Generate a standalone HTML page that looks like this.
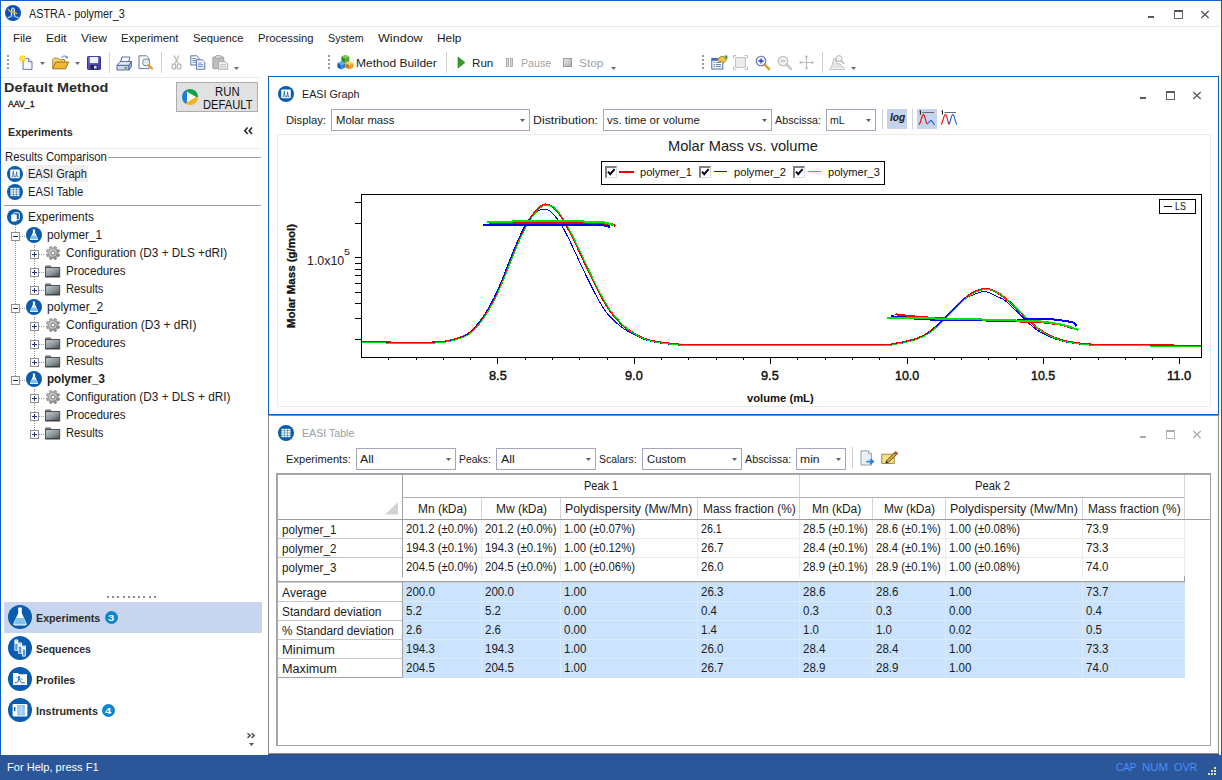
<!DOCTYPE html>
<html lang="en"><head><meta charset="utf-8"><title>ASTRA - polymer_3</title>
<style>
html,body{margin:0;padding:0;background:#fff;}
body{width:1222px;height:780px;position:relative;overflow:hidden;font-family:"Liberation Sans",sans-serif;font-size:12px;color:#000;}
.a{position:absolute;box-sizing:border-box;}
.t{position:absolute;white-space:nowrap;transform-origin:0 0;}
svg{position:absolute;overflow:visible;}
</style></head><body>
<div class="a" style="left:0;top:0;width:1222px;height:780px;background:#fff"></div>
<div class="a " style="left:0px;top:0px;width:1222px;height:1px;background:#1161c9;"></div>
<div class="a " style="left:0px;top:0px;width:1px;height:755px;background:#1161c9;"></div>
<div class="a " style="left:1221px;top:0px;width:1px;height:755px;background:#1161c9;"></div>
<header class="titlebar">
<div class="a " style="left:1px;top:26px;width:1219px;height:1px;background:#e9e9e9;"></div>
<svg style="left:5px;top:5px" width="16" height="16" viewBox="0 0 16 16"><circle cx="8" cy="8" r="8" fill="#0b52b4"/><path d="M2.6,12.4 C5.6,12.4 6.3,11.4 6.5,9 L6.8,3.6 Q8,2.2 9.2,3.6 L9.5,9 C9.7,11.4 10.4,12.4 13.4,12.4" fill="#2a7be0" stroke="#fff" stroke-width="1"/><path d="M3.2,4.4 L5.8,6.9 L11.8,8.4" fill="none" stroke="#f2b71f" stroke-width="1.3" stroke-linecap="round"/></svg>
<span class="t " style="left:28.80px;top:7.84px;font-size:12px;line-height:12px;color:#1b1b1b;transform:scaleX(0.9024);">ASTRA - polymer_3</span>
<div class="a " style="left:1148px;top:16px;width:6px;height:2px;background:#5a5a5a;"></div>
<div class="a " style="left:1174px;top:10px;width:9px;height:9px;border:1px solid #666;border-top:2px solid #555;"></div>
<svg style="left:1201px;top:11px" width="8" height="7" viewBox="0 0 8 7"><path d="M0.3,0 L7.7,7 M7.7,0 L0.3,7" stroke="#555" stroke-width="1.3" fill="none"/></svg>
</header>
<nav class="menubar">
<span class="t " style="left:12.80px;top:32.69px;font-size:11px;line-height:11px;color:#1b1b1b;transform:scaleX(1.0488);">File</span>
<span class="t " style="left:45.90px;top:32.69px;font-size:11px;line-height:11px;color:#1b1b1b;transform:scaleX(1.0913);">Edit</span>
<span class="t " style="left:80.70px;top:32.69px;font-size:11px;line-height:11px;color:#1b1b1b;transform:scaleX(1.0991);">View</span>
<span class="t " style="left:120.80px;top:32.69px;font-size:11px;line-height:11px;color:#1b1b1b;transform:scaleX(1.0334);">Experiment</span>
<span class="t " style="left:192.60px;top:32.69px;font-size:11px;line-height:11px;color:#1b1b1b;transform:scaleX(1.0192);">Sequence</span>
<span class="t " style="left:257.70px;top:32.69px;font-size:11px;line-height:11px;color:#1b1b1b;transform:scaleX(1.0216);">Processing</span>
<span class="t " style="left:327.70px;top:32.69px;font-size:11px;line-height:11px;color:#1b1b1b;transform:scaleX(0.9731);">System</span>
<span class="t " style="left:378.00px;top:32.69px;font-size:11px;line-height:11px;color:#1b1b1b;transform:scaleX(1.1425);">Window</span>
<span class="t " style="left:436.70px;top:32.69px;font-size:11px;line-height:11px;color:#1b1b1b;transform:scaleX(1.0829);">Help</span>
</nav>
<div class="toolbar">
<div class="a " style="left:7px;top:55px;width:2px;height:2px;background:#9a9a9a;"></div>
<div class="a " style="left:7px;top:59px;width:2px;height:2px;background:#9a9a9a;"></div>
<div class="a " style="left:7px;top:63px;width:2px;height:2px;background:#9a9a9a;"></div>
<div class="a " style="left:7px;top:67px;width:2px;height:2px;background:#9a9a9a;"></div>
<svg style="left:19px;top:55px" width="15" height="15" viewBox="0 0 15 15"><path d="M4,3.4 L9.6,3.4 L13,6.8 L13,14.4 L4,14.4 Z" fill="#f6f8fc" stroke="#5a6a9a" stroke-width="0.9"/><path d="M9.6,3.4 L9.6,6.8 L13,6.8" fill="#dfe6f3" stroke="#5a6a9a" stroke-width="0.8"/><path d="M3.6,0 V7.2 M0,3.6 H7.2 M1,1 L6.2,6.2 M6.2,1 L1,6.2" stroke="#f4c818" stroke-width="1.2"/><rect x="2.5" y="2.5" width="2.2" height="2.2" fill="#fff6b0"/></svg>
<svg style="left:40px;top:62px" width="5" height="3" viewBox="0 0 5 3"><path d="M0,0 L5,0 L2.5,3 Z" fill="#6a6a6a"/></svg>
<svg style="left:52px;top:55px" width="18" height="15" viewBox="0 0 18 15"><path d="M0.8,13.6 L0.8,4.4 L2,3.2 L6,3.2 L7.2,4.6 L12.6,4.6 L12.6,7" fill="#f7d774" stroke="#a07a18" stroke-width="0.9"/><path d="M0.8,13.8 L3.6,7 L16.6,7 L13.6,13.8 Z" fill="#f2b632" stroke="#8c6a12" stroke-width="0.9"/><path d="M9.4,3 C10.6,0.6 13.6,0.4 15,2.4" fill="none" stroke="#4a78c8" stroke-width="1"/><path d="M15.8,0.8 L15.6,3.4 L13.2,2.8 Z" fill="#4a78c8"/></svg>
<svg style="left:75px;top:62px" width="5" height="3" viewBox="0 0 5 3"><path d="M0,0 L5,0 L2.5,3 Z" fill="#6a6a6a"/></svg>
<svg style="left:87px;top:56px" width="14" height="14" viewBox="0 0 14 14"><defs><linearGradient id="svg1" x1="0" y1="0" x2="1" y2="1"><stop offset="0" stop-color="#6a62d8"/><stop offset="1" stop-color="#3a34a4"/></linearGradient></defs><rect x="0.5" y="0.5" width="13" height="13" rx="0.8" fill="url(#svg1)" stroke="#2d2782" stroke-width="0.9"/><rect x="2.8" y="0.9" width="8.4" height="6.2" fill="#eef0fb"/><rect x="3.6" y="9" width="6.8" height="4.2" fill="#23204a"/><rect x="7" y="9.8" width="2.6" height="2.8" fill="#d8d8ea"/></svg>
<div class="a " style="left:109px;top:52px;width:1px;height:21px;background:#d4d4d4;"></div>
<svg style="left:116px;top:56px" width="16" height="15" viewBox="0 0 16 15"><path d="M4.4,6 L6,1 L14,1 L12.6,6 Z" fill="#fff" stroke="#46609c" stroke-width="0.9"/><path d="M1,9.4 L4,5.6 L15.4,5.6 L13,9.4 Z" fill="#e6edf8" stroke="#46609c" stroke-width="0.9"/><path d="M1,9.4 L13,9.4 L13,14 L1,14 Z" fill="#cfdaee" stroke="#46609c" stroke-width="0.9"/><path d="M13,9.4 L15.4,5.6 L15.4,10.4 L13,14 Z" fill="#a8b8d8" stroke="#46609c" stroke-width="0.9"/><rect x="8.6" y="11" width="1.2" height="1.6" fill="#d03030"/><rect x="10" y="11" width="1.2" height="1.6" fill="#30a030"/></svg>
<svg style="left:138px;top:55px" width="15" height="15" viewBox="0 0 15 15"><path d="M1,0.8 L8.4,0.8 L11,3.4 L11,13.6 L1,13.6 Z" fill="#fbfcfe" stroke="#5a6a8a" stroke-width="0.9"/><circle cx="8.2" cy="7.4" r="3.6" fill="#dfeaf6" stroke="#7a8494" stroke-width="1"/><path d="M10.8,10.2 L14,13.6" stroke="#e09a2a" stroke-width="2.2" stroke-linecap="round"/></svg>
<div class="a " style="left:161px;top:52px;width:1px;height:21px;background:#d4d4d4;"></div>
<svg style="left:171px;top:55px" width="11" height="15" viewBox="0 0 11 15"><path d="M3,0.6 L7,8.6 M8,0.6 L4,8.6" stroke="#b4b4b4" stroke-width="1.2" fill="none"/><ellipse cx="2.9" cy="11.4" rx="1.9" ry="2.6" fill="none" stroke="#b4b4b4" stroke-width="1.2"/><ellipse cx="8.1" cy="11.4" rx="1.9" ry="2.6" fill="none" stroke="#b4b4b4" stroke-width="1.2"/></svg>
<svg style="left:190px;top:55px" width="16" height="15" viewBox="0 0 16 15"><path d="M0.8,0.8 L6.6,0.8 L9,3.2 L9,10 L0.8,10 Z" fill="#fff" stroke="#44629e" stroke-width="0.9"/><path d="M2.2,3.6 H6.4 M2.2,5.4 H7.6 M2.2,7.2 H7.6" stroke="#5a82c8" stroke-width="0.9"/><path d="M6.4,4.8 L12.2,4.8 L14.8,7.4 L14.8,14.2 L6.4,14.2 Z" fill="#fff" stroke="#44629e" stroke-width="0.9"/><path d="M7.8,8 H11.8 M7.8,9.8 H13.4 M7.8,11.6 H13.4" stroke="#5a82c8" stroke-width="0.9"/></svg>
<svg style="left:212px;top:55px" width="17" height="15" viewBox="0 0 17 15"><rect x="0.8" y="2" width="11" height="11.6" rx="0.8" fill="#bdbdbd" stroke="#9a9a9a" stroke-width="0.9"/><rect x="3.6" y="0.6" width="5.4" height="3" rx="0.8" fill="#d8d8d8" stroke="#9a9a9a" stroke-width="0.8"/><path d="M6.6,6.4 L13.2,6.4 L15.6,8.8 L15.6,14.2 L6.6,14.2 Z" fill="#eee" stroke="#a4a4a4" stroke-width="0.9"/><path d="M8.2,9.6 H13.8 M8.2,11.6 H13.8" stroke="#bcbcbc" stroke-width="0.9"/></svg>
<svg style="left:234px;top:67px" width="5" height="3" viewBox="0 0 5 3"><path d="M0,0 L5,0 L2.5,3 Z" fill="#6a6a6a"/></svg>
<div class="a " style="left:328px;top:55px;width:2px;height:2px;background:#9a9a9a;"></div>
<div class="a " style="left:328px;top:59px;width:2px;height:2px;background:#9a9a9a;"></div>
<div class="a " style="left:328px;top:63px;width:2px;height:2px;background:#9a9a9a;"></div>
<div class="a " style="left:328px;top:67px;width:2px;height:2px;background:#9a9a9a;"></div>
<svg style="left:337px;top:54px" width="17" height="17" viewBox="0 0 17 17"><path d="M4.4,2.6 l4,-2 l4,2 l-4,2 Z" fill="#7cc85a"/><path d="M4.4,2.6 l4,2 l0,4.6 l-4,-2 Z" fill="#2f8a22"/><path d="M12.4,2.6 l-4,2 l0,4.6 l4,-2 Z" fill="#4aa832"/><path d="M0.4,9 l4,-2 l4,2 l-4,2 Z" fill="#5aa8ec"/><path d="M0.4,9 l4,2 l0,4.6 l-4,-2 Z" fill="#1660b4"/><path d="M8.4,9 l-4,2 l0,4.6 l4,-2 Z" fill="#2a80d6"/><path d="M8.4,9 l4,-2 l4,2 l-4,2 Z" fill="#ffcf5a"/><path d="M8.4,9 l4,2 l0,4.6 l-4,-2 Z" fill="#d87c08"/><path d="M16.4,9 l-4,2 l0,4.6 l4,-2 Z" fill="#f09c1c"/></svg>
<span class="t " style="left:355.90px;top:57.69px;font-size:11px;line-height:11px;color:#1b1b1b;transform:scaleX(1.0919);">Method Builder</span>
<div class="a " style="left:446px;top:52px;width:1px;height:21px;background:#d4d4d4;"></div>
<svg style="left:458px;top:57px" width="7" height="11" viewBox="0 0 7 11"><path d="M0,0 L7,5.5 L0,11 Z" fill="#3a9a2a" stroke="#1f6e14" stroke-width="0.6"/></svg>
<span class="t " style="left:471.60px;top:57.69px;font-size:11px;line-height:11px;color:#1b1b1b;transform:scaleX(1.0551);">Run</span>
<div class="a " style="left:506px;top:58px;width:3px;height:9px;background:#dadada;border:1px solid #adadad;"></div>
<div class="a " style="left:510px;top:58px;width:3px;height:9px;background:#dadada;border:1px solid #adadad;"></div>
<span class="t " style="left:521.10px;top:57.69px;font-size:11px;line-height:11px;color:#a3a3a3;transform:scaleX(0.9646);">Pause</span>
<div class="a " style="left:563px;top:58px;width:9px;height:9px;background:linear-gradient(135deg,#e8e8e8,#b0b0b0);border:1px solid #9c9c9c;"></div>
<span class="t " style="left:578.80px;top:57.69px;font-size:11px;line-height:11px;color:#a3a3a3;transform:scaleX(1.0821);">Stop</span>
<svg style="left:611px;top:67px" width="5" height="3" viewBox="0 0 5 3"><path d="M0,0 L5,0 L2.5,3 Z" fill="#6a6a6a"/></svg>
<div class="a " style="left:702px;top:55px;width:2px;height:2px;background:#9a9a9a;"></div>
<div class="a " style="left:702px;top:59px;width:2px;height:2px;background:#9a9a9a;"></div>
<div class="a " style="left:702px;top:63px;width:2px;height:2px;background:#9a9a9a;"></div>
<div class="a " style="left:702px;top:67px;width:2px;height:2px;background:#9a9a9a;"></div>
<svg style="left:711px;top:55px" width="17" height="15" viewBox="0 0 17 15"><rect x="0.8" y="3.4" width="11" height="10.6" fill="#fbfcfe" stroke="#3a5a98" stroke-width="0.9"/><rect x="0.8" y="3.4" width="11" height="2.4" fill="#3a6cc0"/><path d="M2.5,7.5 H4 M5,7.5 H10 M2.5,9.5 H4 M5,9.5 H10 M2.5,11.5 H4 M5,11.5 H10" stroke="#6a86c0" stroke-width="1" fill="none"/><path d="M6.4,4.8 L10,1.2 L13.4,1.8 L15.4,5 L12.4,8.2 L10.4,6.4 L8.6,7.2 Z" fill="#f0c24a" stroke="#9a7414" stroke-width="0.8"/><path d="M13.2,0.6 L16.4,0.6 L16.4,4.4 L15,3.4 Z" fill="#2e9a3c"/></svg>
<svg style="left:733px;top:55px" width="15" height="15" viewBox="0 0 15 15"><rect x="2.6" y="2.6" width="9.8" height="9.8" fill="#ececec" stroke="#bdbdbd" stroke-width="0.9"/><path d="M0.6,3.4 V0.6 H3.4 M11.6,0.6 H14.4 V3.4 M14.4,11.6 V14.4 H11.6 M3.4,14.4 H0.6 V11.6" fill="none" stroke="#b8b8b8" stroke-width="1"/></svg>
<svg style="left:755px;top:55px" width="16" height="16" viewBox="0 0 16 16"><path d="M9.4,9.4 L14,14" stroke="#d9a62a" stroke-width="2.6" stroke-linecap="round"/><circle cx="6" cy="6" r="4.8" fill="#eef4ff" stroke="#6a7690" stroke-width="1.1"/><path d="M3.4,6 H8.6 M6,3.4 V8.6" stroke="#1f3fc0" stroke-width="1.3"/></svg>
<svg style="left:777px;top:55px" width="16" height="16" viewBox="0 0 16 16"><path d="M9.4,9.4 L14,14" stroke="#c9c9c9" stroke-width="2.6" stroke-linecap="round"/><circle cx="6" cy="6" r="4.8" fill="#f3f3f3" stroke="#b9b9b9" stroke-width="1.1"/><path d="M3.4,6 H8.6" stroke="#b4b4b4" stroke-width="1.3"/></svg>
<svg style="left:799px;top:55px" width="15" height="15" viewBox="0 0 15 15"><path d="M7.5,1.4 V13.6 M1.4,7.5 H13.6" stroke="#b9b9b9" stroke-width="1.1"/><path d="M7.5,0 L9.4,2.4 L5.6,2.4 Z M7.5,15 L9.4,12.6 L5.6,12.6 Z M0,7.5 L2.4,5.6 L2.4,9.4 Z M15,7.5 L12.6,5.6 L12.6,9.4 Z" fill="#b9b9b9"/></svg>
<div class="a " style="left:822px;top:52px;width:1px;height:21px;background:#d4d4d4;"></div>
<svg style="left:829px;top:55px" width="17" height="15" viewBox="0 0 17 15"><path d="M0.6,13.2 C3,13 3.4,9 4.6,4.6 C5.4,2 6.4,3 7.2,6 C8,9.4 9,9 10,8.6 C11.4,8.2 12,12.6 15.6,13" fill="#e6e6e6" stroke="#b4b4b4" stroke-width="0.9"/><path d="M0.2,14.4 H16" stroke="#b4b4b4" stroke-width="0.9"/><circle cx="10" cy="3.6" r="3" fill="#f3f3f3" stroke="#b9b9b9" stroke-width="1"/><path d="M12.2,5.8 L14.6,8.2" stroke="#bdbdbd" stroke-width="1.8" stroke-linecap="round"/></svg>
<svg style="left:851px;top:67px" width="5" height="3" viewBox="0 0 5 3"><path d="M0,0 L5,0 L2.5,3 Z" fill="#6a6a6a"/></svg>
</div>
<aside class="sidebar">
<div class="a " style="left:1px;top:77px;width:260px;height:1px;background:#e9e9e9;"></div>
<span class="t " style="left:4.20px;top:80.57px;font-size:13.5px;line-height:13.5px;color:#2b2b2b;font-weight:700;transform:scaleX(1.0697);">Default Method</span>
<span class="t " style="left:7.70px;top:99.98px;font-size:9px;line-height:9px;color:#111;-webkit-text-stroke:0.3px #111;transform:scaleX(0.9722);">AAV_1</span>
<div class="a " style="left:176px;top:82px;width:82px;height:30px;background:#e1e1e1;border:1px solid #adadad;"></div>
<svg style="left:182px;top:89px" width="16" height="16" viewBox="0 0 16 16"><path d="M8,8 L4,1.07 A8,8 0 0 0 4,14.93 Z" fill="#1f7fd3"/><path d="M8,8 L4,1.07 A8,8 0 0 1 16,8 Z" fill="#12a24c"/><path d="M8,8 L16,8 A8,8 0 0 1 4,14.93 Z" fill="#f7b21e"/><path d="M5,2.8 L14,8 L5,13.2 Z" fill="#fff"/></svg>
<span class="t " style="left:214.70px;top:85.84px;font-size:12px;line-height:12px;color:#111;transform:scaleX(0.9462);">RUN</span>
<span class="t " style="left:202.60px;top:98.84px;font-size:12px;line-height:12px;color:#111;transform:scaleX(0.9318);">DEFAULT</span>
<span class="t " style="left:7.70px;top:126.69px;font-size:11px;line-height:11px;color:#2b2b2b;font-weight:700;transform:scaleX(0.9814);">Experiments</span>
<svg style="left:244px;top:127px" width="9" height="8" viewBox="0 0 9 8"><path d="M3.6,0.6 L0.8,3.8 L3.6,7 M8,0.6 L5.2,3.8 L8,7" stroke="#222" stroke-width="1.5" fill="none"/></svg>
<div class="a " style="left:4px;top:148px;width:257px;height:1px;background:#e9e9e9;"></div>
<span class="t " style="left:4.80px;top:150.84px;font-size:12px;line-height:12px;color:#1b1b1b;transform:scaleX(0.9431);">Results Comparison</span>
<div class="a " style="left:108px;top:157px;width:153px;height:1px;background:#a0a0a0;"></div>
<div class="a " style="left:26px;top:165px;width:62px;height:17px;background:#efefef;"></div>
<svg style="left:7px;top:166px" width="16" height="16" viewBox="0 0 16 16"><circle cx="8" cy="8" r="8" fill="#0a5cad"/><rect x="3.2" y="3.5" width="9.6" height="8.8" rx="1.1" fill="#fff"/><path d="M4.4,10.9 L5.6,10.7 L6.3,5 L7.1,10.7 L8.9,10.7 L9.6,5.8 L10.3,10.7 L11.7,10.9" fill="none" stroke="#0a5cad" stroke-width="0.75"/></svg>
<span class="t " style="left:27.60px;top:167.84px;font-size:12px;line-height:12px;color:#1b1b1b;transform:scaleX(0.9183);">EASI Graph</span>
<svg style="left:7px;top:184px" width="16" height="16" viewBox="0 0 16 16"><circle cx="8" cy="8" r="8" fill="#0a5cad"/><rect x="3.40" y="3.80" width="2.8" height="1.8" fill="#eef3ea"/><rect x="6.55" y="3.80" width="2.8" height="1.8" fill="#eef3ea"/><rect x="9.70" y="3.80" width="2.8" height="1.8" fill="#eef3ea"/><rect x="3.40" y="6.00" width="2.8" height="1.8" fill="#eef3ea"/><rect x="6.55" y="6.00" width="2.8" height="1.8" fill="#eef3ea"/><rect x="9.70" y="6.00" width="2.8" height="1.8" fill="#eef3ea"/><rect x="3.40" y="8.20" width="2.8" height="1.8" fill="#eef3ea"/><rect x="6.55" y="8.20" width="2.8" height="1.8" fill="#eef3ea"/><rect x="9.70" y="8.20" width="2.8" height="1.8" fill="#eef3ea"/><rect x="3.40" y="10.40" width="2.8" height="1.8" fill="#eef3ea"/><rect x="6.55" y="10.40" width="2.8" height="1.8" fill="#eef3ea"/><rect x="9.70" y="10.40" width="2.8" height="1.8" fill="#eef3ea"/></svg>
<span class="t " style="left:27.60px;top:185.84px;font-size:12px;line-height:12px;color:#1b1b1b;transform:scaleX(0.9348);">EASI Table</span>
<div class="a " style="left:4px;top:205px;width:257px;height:1px;background:#a0a0a0;"></div>
<svg style="left:7px;top:209px" width="16" height="16" viewBox="0 0 16 16"><circle cx="8" cy="8" r="8" fill="#0a5cad"/><rect x="6.7" y="3.8" width="5.6" height="6.8" rx="0.8" fill="none" stroke="#fff" stroke-width="1"/><rect x="4.2" y="5.6" width="5.6" height="6.8" rx="0.8" fill="#fff"/></svg>
<span class="t " style="left:27.60px;top:210.84px;font-size:12px;line-height:12px;color:#1b1b1b;transform:scaleX(0.9880);">Experiments</span>
<div class="tree">
<div class="a" style="left:15px;top:225px;width:1px;height:156px;background:repeating-linear-gradient(to bottom,#9a9a9a 0 1px,transparent 1px 2px)"></div>
<div class="a" style="left:20px;top:236px;width:7px;height:1px;background:repeating-linear-gradient(to right,#9a9a9a 0 1px,transparent 1px 2px)"></div>
<div class="a " style="left:11px;top:232px;width:9px;height:9px;background:#fff;border:1px solid #8f8f8f;"></div>
<div class="a " style="left:13px;top:236px;width:5px;height:1px;background:#26328c;"></div>
<svg style="left:26px;top:227px" width="16" height="16" viewBox="0 0 16 16"><circle cx="8" cy="8" r="8" fill="#0a5cad"/><path d="M6.9,2.6 L9.1,2.6 L9.1,5.6 L12,12 Q12.2,12.9 11.2,12.9 L4.8,12.9 Q3.8,12.9 4,12 L6.9,5.6 Z" fill="#fff"/><path d="M5.9,8.6 L10.1,8.6 L11.4,11.6 Q11.5,12.3 10.9,12.3 L5.1,12.3 Q4.5,12.3 4.6,11.6 Z" fill="#7fc0ee"/></svg>
<span class="t " style="left:47.10px;top:228.84px;font-size:12px;line-height:12px;color:#1b1b1b;transform:scaleX(0.9834);">polymer_1</span>
<div class="a" style="left:34px;top:245px;width:1px;height:46px;background:repeating-linear-gradient(to bottom,#9a9a9a 0 1px,transparent 1px 2px)"></div>
<div class="a" style="left:39px;top:254px;width:6px;height:1px;background:repeating-linear-gradient(to right,#9a9a9a 0 1px,transparent 1px 2px)"></div>
<div class="a " style="left:30px;top:250px;width:9px;height:9px;background:#fff;border:1px solid #8f8f8f;"></div>
<div class="a " style="left:32px;top:254px;width:5px;height:1px;background:#26328c;"></div>
<div class="a " style="left:34px;top:252px;width:1px;height:5px;background:#26328c;"></div>
<svg style="left:46px;top:246px" width="14" height="14" viewBox="0 0 14 14"><defs><linearGradient id="gg46246" x1="0" y1="0" x2="1" y2="1"><stop offset="0" stop-color="#c4c4c4"/><stop offset="1" stop-color="#7a7a7a"/></linearGradient></defs><polygon points="11.88,7.45 13.73,8.52 12.84,10.68 10.77,10.13 10.13,10.77 10.68,12.84 8.52,13.73 7.45,11.88 6.55,11.88 5.48,13.73 3.32,12.84 3.87,10.77 3.23,10.13 1.16,10.68 0.27,8.52 2.12,7.45 2.12,6.55 0.27,5.48 1.16,3.32 3.23,3.87 3.87,3.23 3.32,1.16 5.48,0.27 6.55,2.12 7.45,2.12 8.52,0.27 10.68,1.16 10.13,3.23 10.77,3.87 12.84,3.32 13.73,5.48 11.88,6.55" fill="url(#gg46246)" stroke="#6e6e6e" stroke-width="0.5"/><circle cx="7" cy="7" r="3.2" fill="none" stroke="#dadada" stroke-width="0.9"/><circle cx="7" cy="7" r="1.8" fill="#fff" stroke="#6a6a6a" stroke-width="0.7"/></svg>
<span class="t " style="left:66.00px;top:246.84px;font-size:12px;line-height:12px;color:#1b1b1b;transform:scaleX(0.9824);">Configuration (D3 + DLS +dRI)</span>
<div class="a" style="left:39px;top:272px;width:6px;height:1px;background:repeating-linear-gradient(to right,#9a9a9a 0 1px,transparent 1px 2px)"></div>
<div class="a " style="left:30px;top:268px;width:9px;height:9px;background:#fff;border:1px solid #8f8f8f;"></div>
<div class="a " style="left:32px;top:272px;width:5px;height:1px;background:#26328c;"></div>
<div class="a " style="left:34px;top:270px;width:1px;height:5px;background:#26328c;"></div>
<svg style="left:45px;top:265px" width="16" height="13" viewBox="0 0 16 13"><defs><linearGradient id="fg45265" x1="0" y1="0" x2="0.9" y2="1"><stop offset="0" stop-color="#c3ccd1"/><stop offset="0.55" stop-color="#8f989d"/><stop offset="1" stop-color="#4b5256"/></linearGradient></defs><path d="M0.8,2.6 L0.8,0.9 L5.4,0.9 L6.2,2.6 Z" fill="#9aa2a7" stroke="#4a4f52" stroke-width="0.8"/><rect x="0.5" y="2.5" width="14.2" height="9.3" fill="url(#fg45265)" stroke="#3f4447" stroke-width="0.9"/><rect x="0.5" y="11.4" width="14.2" height="0.9" fill="#2e3235"/></svg>
<span class="t " style="left:66.00px;top:264.84px;font-size:12px;line-height:12px;color:#1b1b1b;transform:scaleX(0.9695);">Procedures</span>
<div class="a" style="left:39px;top:290px;width:6px;height:1px;background:repeating-linear-gradient(to right,#9a9a9a 0 1px,transparent 1px 2px)"></div>
<div class="a " style="left:30px;top:286px;width:9px;height:9px;background:#fff;border:1px solid #8f8f8f;"></div>
<div class="a " style="left:32px;top:290px;width:5px;height:1px;background:#26328c;"></div>
<div class="a " style="left:34px;top:288px;width:1px;height:5px;background:#26328c;"></div>
<svg style="left:45px;top:283px" width="16" height="13" viewBox="0 0 16 13"><defs><linearGradient id="fg45283" x1="0" y1="0" x2="0.9" y2="1"><stop offset="0" stop-color="#c3ccd1"/><stop offset="0.55" stop-color="#8f989d"/><stop offset="1" stop-color="#4b5256"/></linearGradient></defs><path d="M0.8,2.6 L0.8,0.9 L5.4,0.9 L6.2,2.6 Z" fill="#9aa2a7" stroke="#4a4f52" stroke-width="0.8"/><rect x="0.5" y="2.5" width="14.2" height="9.3" fill="url(#fg45283)" stroke="#3f4447" stroke-width="0.9"/><rect x="0.5" y="11.4" width="14.2" height="0.9" fill="#2e3235"/></svg>
<span class="t " style="left:66.00px;top:282.84px;font-size:12px;line-height:12px;color:#1b1b1b;transform:scaleX(0.9346);">Results</span>
<div class="a" style="left:20px;top:308px;width:7px;height:1px;background:repeating-linear-gradient(to right,#9a9a9a 0 1px,transparent 1px 2px)"></div>
<div class="a " style="left:11px;top:304px;width:9px;height:9px;background:#fff;border:1px solid #8f8f8f;"></div>
<div class="a " style="left:13px;top:308px;width:5px;height:1px;background:#26328c;"></div>
<svg style="left:26px;top:299px" width="16" height="16" viewBox="0 0 16 16"><circle cx="8" cy="8" r="8" fill="#0a5cad"/><path d="M6.9,2.6 L9.1,2.6 L9.1,5.6 L12,12 Q12.2,12.9 11.2,12.9 L4.8,12.9 Q3.8,12.9 4,12 L6.9,5.6 Z" fill="#fff"/><path d="M5.9,8.6 L10.1,8.6 L11.4,11.6 Q11.5,12.3 10.9,12.3 L5.1,12.3 Q4.5,12.3 4.6,11.6 Z" fill="#7fc0ee"/></svg>
<span class="t " style="left:47.10px;top:300.84px;font-size:12px;line-height:12px;color:#1b1b1b;">polymer_2</span>
<div class="a" style="left:34px;top:317px;width:1px;height:46px;background:repeating-linear-gradient(to bottom,#9a9a9a 0 1px,transparent 1px 2px)"></div>
<div class="a" style="left:39px;top:326px;width:6px;height:1px;background:repeating-linear-gradient(to right,#9a9a9a 0 1px,transparent 1px 2px)"></div>
<div class="a " style="left:30px;top:322px;width:9px;height:9px;background:#fff;border:1px solid #8f8f8f;"></div>
<div class="a " style="left:32px;top:326px;width:5px;height:1px;background:#26328c;"></div>
<div class="a " style="left:34px;top:324px;width:1px;height:5px;background:#26328c;"></div>
<svg style="left:46px;top:318px" width="14" height="14" viewBox="0 0 14 14"><defs><linearGradient id="gg46318" x1="0" y1="0" x2="1" y2="1"><stop offset="0" stop-color="#c4c4c4"/><stop offset="1" stop-color="#7a7a7a"/></linearGradient></defs><polygon points="11.88,7.45 13.73,8.52 12.84,10.68 10.77,10.13 10.13,10.77 10.68,12.84 8.52,13.73 7.45,11.88 6.55,11.88 5.48,13.73 3.32,12.84 3.87,10.77 3.23,10.13 1.16,10.68 0.27,8.52 2.12,7.45 2.12,6.55 0.27,5.48 1.16,3.32 3.23,3.87 3.87,3.23 3.32,1.16 5.48,0.27 6.55,2.12 7.45,2.12 8.52,0.27 10.68,1.16 10.13,3.23 10.77,3.87 12.84,3.32 13.73,5.48 11.88,6.55" fill="url(#gg46318)" stroke="#6e6e6e" stroke-width="0.5"/><circle cx="7" cy="7" r="3.2" fill="none" stroke="#dadada" stroke-width="0.9"/><circle cx="7" cy="7" r="1.8" fill="#fff" stroke="#6a6a6a" stroke-width="0.7"/></svg>
<span class="t " style="left:66.00px;top:318.84px;font-size:12px;line-height:12px;color:#1b1b1b;">Configuration (D3 + dRI)</span>
<div class="a" style="left:39px;top:344px;width:6px;height:1px;background:repeating-linear-gradient(to right,#9a9a9a 0 1px,transparent 1px 2px)"></div>
<div class="a " style="left:30px;top:340px;width:9px;height:9px;background:#fff;border:1px solid #8f8f8f;"></div>
<div class="a " style="left:32px;top:344px;width:5px;height:1px;background:#26328c;"></div>
<div class="a " style="left:34px;top:342px;width:1px;height:5px;background:#26328c;"></div>
<svg style="left:45px;top:337px" width="16" height="13" viewBox="0 0 16 13"><defs><linearGradient id="fg45337" x1="0" y1="0" x2="0.9" y2="1"><stop offset="0" stop-color="#c3ccd1"/><stop offset="0.55" stop-color="#8f989d"/><stop offset="1" stop-color="#4b5256"/></linearGradient></defs><path d="M0.8,2.6 L0.8,0.9 L5.4,0.9 L6.2,2.6 Z" fill="#9aa2a7" stroke="#4a4f52" stroke-width="0.8"/><rect x="0.5" y="2.5" width="14.2" height="9.3" fill="url(#fg45337)" stroke="#3f4447" stroke-width="0.9"/><rect x="0.5" y="11.4" width="14.2" height="0.9" fill="#2e3235"/></svg>
<span class="t " style="left:66.00px;top:336.84px;font-size:12px;line-height:12px;color:#1b1b1b;transform:scaleX(0.9695);">Procedures</span>
<div class="a" style="left:39px;top:362px;width:6px;height:1px;background:repeating-linear-gradient(to right,#9a9a9a 0 1px,transparent 1px 2px)"></div>
<div class="a " style="left:30px;top:358px;width:9px;height:9px;background:#fff;border:1px solid #8f8f8f;"></div>
<div class="a " style="left:32px;top:362px;width:5px;height:1px;background:#26328c;"></div>
<div class="a " style="left:34px;top:360px;width:1px;height:5px;background:#26328c;"></div>
<svg style="left:45px;top:355px" width="16" height="13" viewBox="0 0 16 13"><defs><linearGradient id="fg45355" x1="0" y1="0" x2="0.9" y2="1"><stop offset="0" stop-color="#c3ccd1"/><stop offset="0.55" stop-color="#8f989d"/><stop offset="1" stop-color="#4b5256"/></linearGradient></defs><path d="M0.8,2.6 L0.8,0.9 L5.4,0.9 L6.2,2.6 Z" fill="#9aa2a7" stroke="#4a4f52" stroke-width="0.8"/><rect x="0.5" y="2.5" width="14.2" height="9.3" fill="url(#fg45355)" stroke="#3f4447" stroke-width="0.9"/><rect x="0.5" y="11.4" width="14.2" height="0.9" fill="#2e3235"/></svg>
<span class="t " style="left:66.00px;top:354.84px;font-size:12px;line-height:12px;color:#1b1b1b;transform:scaleX(0.9346);">Results</span>
<div class="a" style="left:20px;top:380px;width:7px;height:1px;background:repeating-linear-gradient(to right,#9a9a9a 0 1px,transparent 1px 2px)"></div>
<div class="a " style="left:11px;top:376px;width:9px;height:9px;background:#fff;border:1px solid #8f8f8f;"></div>
<div class="a " style="left:13px;top:380px;width:5px;height:1px;background:#26328c;"></div>
<svg style="left:26px;top:371px" width="16" height="16" viewBox="0 0 16 16"><circle cx="8" cy="8" r="8" fill="#0a5cad"/><path d="M6.9,2.6 L9.1,2.6 L9.1,5.6 L12,12 Q12.2,12.9 11.2,12.9 L4.8,12.9 Q3.8,12.9 4,12 L6.9,5.6 Z" fill="#fff"/><path d="M5.9,8.6 L10.1,8.6 L11.4,11.6 Q11.5,12.3 10.9,12.3 L5.1,12.3 Q4.5,12.3 4.6,11.6 Z" fill="#7fc0ee"/></svg>
<span class="t " style="left:47.10px;top:372.84px;font-size:12px;line-height:12px;color:#1b1b1b;font-weight:700;transform:scaleX(0.9645);">polymer_3</span>
<div class="a" style="left:34px;top:389px;width:1px;height:46px;background:repeating-linear-gradient(to bottom,#9a9a9a 0 1px,transparent 1px 2px)"></div>
<div class="a" style="left:39px;top:398px;width:6px;height:1px;background:repeating-linear-gradient(to right,#9a9a9a 0 1px,transparent 1px 2px)"></div>
<div class="a " style="left:30px;top:394px;width:9px;height:9px;background:#fff;border:1px solid #8f8f8f;"></div>
<div class="a " style="left:32px;top:398px;width:5px;height:1px;background:#26328c;"></div>
<div class="a " style="left:34px;top:396px;width:1px;height:5px;background:#26328c;"></div>
<svg style="left:46px;top:390px" width="14" height="14" viewBox="0 0 14 14"><defs><linearGradient id="gg46390" x1="0" y1="0" x2="1" y2="1"><stop offset="0" stop-color="#c4c4c4"/><stop offset="1" stop-color="#7a7a7a"/></linearGradient></defs><polygon points="11.88,7.45 13.73,8.52 12.84,10.68 10.77,10.13 10.13,10.77 10.68,12.84 8.52,13.73 7.45,11.88 6.55,11.88 5.48,13.73 3.32,12.84 3.87,10.77 3.23,10.13 1.16,10.68 0.27,8.52 2.12,7.45 2.12,6.55 0.27,5.48 1.16,3.32 3.23,3.87 3.87,3.23 3.32,1.16 5.48,0.27 6.55,2.12 7.45,2.12 8.52,0.27 10.68,1.16 10.13,3.23 10.77,3.87 12.84,3.32 13.73,5.48 11.88,6.55" fill="url(#gg46390)" stroke="#6e6e6e" stroke-width="0.5"/><circle cx="7" cy="7" r="3.2" fill="none" stroke="#dadada" stroke-width="0.9"/><circle cx="7" cy="7" r="1.8" fill="#fff" stroke="#6a6a6a" stroke-width="0.7"/></svg>
<span class="t " style="left:66.00px;top:390.84px;font-size:12px;line-height:12px;color:#1b1b1b;transform:scaleX(0.9820);">Configuration (D3 + DLS + dRI)</span>
<div class="a" style="left:39px;top:416px;width:6px;height:1px;background:repeating-linear-gradient(to right,#9a9a9a 0 1px,transparent 1px 2px)"></div>
<div class="a " style="left:30px;top:412px;width:9px;height:9px;background:#fff;border:1px solid #8f8f8f;"></div>
<div class="a " style="left:32px;top:416px;width:5px;height:1px;background:#26328c;"></div>
<div class="a " style="left:34px;top:414px;width:1px;height:5px;background:#26328c;"></div>
<svg style="left:45px;top:409px" width="16" height="13" viewBox="0 0 16 13"><defs><linearGradient id="fg45409" x1="0" y1="0" x2="0.9" y2="1"><stop offset="0" stop-color="#c3ccd1"/><stop offset="0.55" stop-color="#8f989d"/><stop offset="1" stop-color="#4b5256"/></linearGradient></defs><path d="M0.8,2.6 L0.8,0.9 L5.4,0.9 L6.2,2.6 Z" fill="#9aa2a7" stroke="#4a4f52" stroke-width="0.8"/><rect x="0.5" y="2.5" width="14.2" height="9.3" fill="url(#fg45409)" stroke="#3f4447" stroke-width="0.9"/><rect x="0.5" y="11.4" width="14.2" height="0.9" fill="#2e3235"/></svg>
<span class="t " style="left:66.00px;top:408.84px;font-size:12px;line-height:12px;color:#1b1b1b;transform:scaleX(0.9695);">Procedures</span>
<div class="a" style="left:39px;top:434px;width:6px;height:1px;background:repeating-linear-gradient(to right,#9a9a9a 0 1px,transparent 1px 2px)"></div>
<div class="a " style="left:30px;top:430px;width:9px;height:9px;background:#fff;border:1px solid #8f8f8f;"></div>
<div class="a " style="left:32px;top:434px;width:5px;height:1px;background:#26328c;"></div>
<div class="a " style="left:34px;top:432px;width:1px;height:5px;background:#26328c;"></div>
<svg style="left:45px;top:427px" width="16" height="13" viewBox="0 0 16 13"><defs><linearGradient id="fg45427" x1="0" y1="0" x2="0.9" y2="1"><stop offset="0" stop-color="#c3ccd1"/><stop offset="0.55" stop-color="#8f989d"/><stop offset="1" stop-color="#4b5256"/></linearGradient></defs><path d="M0.8,2.6 L0.8,0.9 L5.4,0.9 L6.2,2.6 Z" fill="#9aa2a7" stroke="#4a4f52" stroke-width="0.8"/><rect x="0.5" y="2.5" width="14.2" height="9.3" fill="url(#fg45427)" stroke="#3f4447" stroke-width="0.9"/><rect x="0.5" y="11.4" width="14.2" height="0.9" fill="#2e3235"/></svg>
<span class="t " style="left:66.00px;top:426.84px;font-size:12px;line-height:12px;color:#1b1b1b;transform:scaleX(0.9346);">Results</span>
</div>
<div class="navpane">
<div class="a " style="left:107.0px;top:596px;width:2px;height:2px;background:#8c8c8c;"></div>
<div class="a " style="left:112.2px;top:596px;width:2px;height:2px;background:#8c8c8c;"></div>
<div class="a " style="left:117.4px;top:596px;width:2px;height:2px;background:#8c8c8c;"></div>
<div class="a " style="left:122.6px;top:596px;width:2px;height:2px;background:#8c8c8c;"></div>
<div class="a " style="left:127.8px;top:596px;width:2px;height:2px;background:#8c8c8c;"></div>
<div class="a " style="left:133.0px;top:596px;width:2px;height:2px;background:#8c8c8c;"></div>
<div class="a " style="left:138.2px;top:596px;width:2px;height:2px;background:#8c8c8c;"></div>
<div class="a " style="left:143.4px;top:596px;width:2px;height:2px;background:#8c8c8c;"></div>
<div class="a " style="left:148.6px;top:596px;width:2px;height:2px;background:#8c8c8c;"></div>
<div class="a " style="left:153.8px;top:596px;width:2px;height:2px;background:#8c8c8c;"></div>
<div class="a " style="left:4px;top:602px;width:258px;height:31px;background:#c7d6ee;"></div>
<svg style="left:8px;top:605px" width="24" height="24" viewBox="0 0 24 24"><circle cx="12" cy="12" r="12" fill="#0a5cad"/><path d="M10.2,2.6 L13.8,2.6 L13.8,8.2 L18.6,18.6 Q19,20.6 17.2,20.6 L6.8,20.6 Q5,20.6 5.4,18.6 L10.2,8.2 Z" fill="#fff"/><path d="M8.4,13 L15.6,13 L17.7,17.8 Q18,19.5 16.6,19.5 L7.4,19.5 Q6,19.5 6.3,17.8 Z" fill="#7fc0ee"/></svg>
<span class="t " style="left:36.30px;top:612.69px;font-size:11px;line-height:11px;color:#2b2b2b;font-weight:700;transform:scaleX(0.9723);">Experiments</span>
<div class="a " style="left:104.5px;top:611px;width:13px;height:13px;background:#0a85d1;border-radius:6.5px;"></div>
<span class="t " style="left:107.90px;top:613.80px;font-size:8.5px;line-height:8.5px;color:#fff;font-weight:700;transform:scaleX(1.3096);">3</span>
<svg style="left:8px;top:636px" width="24" height="24" viewBox="0 0 24 24"><circle cx="12" cy="12" r="12" fill="#0a5cad"/><rect x="6.4" y="3.6" width="3.9" height="11.2" rx="0.7" fill="#fff"/><rect x="7.2" y="7.6" width="2.3" height="6.4" fill="#4f9fe0"/><rect x="7.0" y="4.2" width="2.7" height="1.4" fill="#b9d8f2"/><rect x="10.2" y="6.6" width="3.9" height="11.2" rx="0.7" fill="#fff"/><rect x="11.0" y="10.6" width="2.3" height="6.4" fill="#4f9fe0"/><rect x="10.799999999999999" y="7.199999999999999" width="2.7" height="1.4" fill="#b9d8f2"/><rect x="14" y="9.4" width="3.9" height="11.2" rx="0.7" fill="#fff"/><rect x="14.8" y="13.4" width="2.3" height="6.4" fill="#4f9fe0"/><rect x="14.6" y="10.0" width="2.7" height="1.4" fill="#b9d8f2"/></svg>
<span class="t " style="left:36.30px;top:643.69px;font-size:11px;line-height:11px;color:#2b2b2b;font-weight:700;transform:scaleX(0.9450);">Sequences</span>
<svg style="left:8px;top:667px" width="24" height="24" viewBox="0 0 24 24"><circle cx="12" cy="12" r="12" fill="#0a5cad"/><path d="M5,7.2 L5,6 L10,6 L11,7.2 L19,7.2 L19,18 L5,18 Z" fill="#fff"/><path d="M7,15.8 C9.6,15.8 10.3,15 10.6,12 L11,9 L11.6,12 C12,15 13,15.8 16.8,15.8" fill="none" stroke="#0a5cad" stroke-width="1"/><path d="M8.2,10 L10.4,11.6 L14.6,12.6" fill="none" stroke="#5aa9e6" stroke-width="0.9"/></svg>
<span class="t " style="left:36.30px;top:674.69px;font-size:11px;line-height:11px;color:#2b2b2b;font-weight:700;transform:scaleX(0.9738);">Profiles</span>
<svg style="left:8px;top:698px" width="24" height="24" viewBox="0 0 24 24"><circle cx="12" cy="12" r="12" fill="#0a5cad"/><rect x="4.6" y="6" width="14.8" height="12.4" rx="1" fill="#fff"/><rect x="9.2" y="7" width="7.6" height="10.4" fill="#8cc4ee"/><rect x="6" y="9" width="1.4" height="4.2" fill="#0a5cad"/><path d="M10.4,9 H15.6 M10.4,11 H15.6 M10.4,13 H15.6 M10.4,15 H15.6 M13,7.4 V17" stroke="#c9e3f7" stroke-width="0.7"/></svg>
<span class="t " style="left:36.30px;top:705.69px;font-size:11px;line-height:11px;color:#2b2b2b;font-weight:700;transform:scaleX(0.9846);">Instruments</span>
<div class="a " style="left:102.0px;top:704px;width:13px;height:13px;background:#0a85d1;border-radius:6.5px;"></div>
<span class="t " style="left:105.40px;top:706.80px;font-size:8.5px;line-height:8.5px;color:#fff;font-weight:700;transform:scaleX(1.3096);">4</span>
<svg style="left:247px;top:733px" width="9" height="6" viewBox="0 0 9 6"><path d="M0.5,0.3 L3.2,2.6 L0.5,4.9 M4.5,0.3 L7.2,2.6 L4.5,4.9" stroke="#555" stroke-width="1.5" fill="none"/></svg>
<svg style="left:249px;top:743px" width="5" height="3" viewBox="0 0 5 3"><path d="M0,0 L5,0 L2.5,3 Z" fill="#555"/></svg>
</div>
</aside>
<footer class="statusbar">
<div class="a" style="left:268px;top:754px;width:951px;height:1px;background:repeating-linear-gradient(to right,#3a4f7e 0 1px,#2b579a 1px 2px)"></div>
<div class="a " style="left:0px;top:755px;width:1222px;height:25px;background:#2b579a;"></div>
<span class="t " style="left:7.00px;top:761.69px;font-size:11px;line-height:11px;color:#fff;transform:scaleX(1.0056);">For Help, press F1</span>
<span class="t " style="left:1116.20px;top:761.69px;font-size:11px;line-height:11px;color:#4a8ff5;transform:scaleX(0.8972);">CAP</span>
<span class="t " style="left:1142.10px;top:761.69px;font-size:11px;line-height:11px;color:#4a8ff5;transform:scaleX(1.0374);">NUM</span>
<span class="t " style="left:1173.90px;top:761.69px;font-size:11px;line-height:11px;color:#4a8ff5;transform:scaleX(0.9814);">OVR</span>
<div class="a " style="left:1214px;top:767px;width:2px;height:2px;background:#e3dcc5;"></div>
<div class="a " style="left:1211px;top:770px;width:2px;height:2px;background:#e3dcc5;"></div>
<div class="a " style="left:1214px;top:770px;width:2px;height:2px;background:#e3dcc5;"></div>
<div class="a " style="left:1208px;top:773px;width:2px;height:2px;background:#e3dcc5;"></div>
<div class="a " style="left:1211px;top:773px;width:2px;height:2px;background:#e3dcc5;"></div>
<div class="a " style="left:1214px;top:773px;width:2px;height:2px;background:#e3dcc5;"></div>
</footer>
<main class="mdi">
<section class="window easi-graph">
<div class="a " style="left:268px;top:76px;width:951px;height:339px;background:#fff;border:1px solid #1161c9;"></div>
<svg style="left:278px;top:86px" width="16" height="16" viewBox="0 0 16 16"><circle cx="8" cy="8" r="8" fill="#0a5cad"/><rect x="3.2" y="3.5" width="9.6" height="8.8" rx="1.1" fill="#fff"/><path d="M4.4,10.9 L5.6,10.7 L6.3,5 L7.1,10.7 L8.9,10.7 L9.6,5.8 L10.3,10.7 L11.7,10.9" fill="none" stroke="#0a5cad" stroke-width="0.75"/></svg>
<span class="t " style="left:301.90px;top:89.43px;font-size:11.3px;line-height:11.3px;color:#1b1b1b;transform:scaleX(0.9522);">EASI Graph</span>
<div class="a " style="left:1140px;top:97px;width:6px;height:2px;background:#5a5a5a;"></div>
<div class="a " style="left:1166px;top:91px;width:9px;height:9px;border:1px solid #666;border-top:2px solid #5a5a5a;"></div>
<svg style="left:1193px;top:92px" width="8" height="7" viewBox="0 0 8 7"><path d="M0.3,0 L7.7,7 M7.7,0 L0.3,7" stroke="#5a5a5a" stroke-width="1.3" fill="none"/></svg>
<span class="t " style="left:285.90px;top:114.69px;font-size:11px;line-height:11px;color:#1b1b1b;transform:scaleX(1.0224);">Display:</span>
<div class="a " style="left:331px;top:109px;width:199px;height:22px;background:#fff;border:1px solid #a2a6bf;"></div>
<span class="t " style="left:335.60px;top:114.69px;font-size:11px;line-height:11px;color:#1b1b1b;transform:scaleX(1.0274);">Molar mass</span>
<svg style="left:520px;top:119px" width="5" height="3" viewBox="0 0 5 3"><path d="M0,0 L5,0 L2.5,3 Z" fill="#606060"/></svg>
<span class="t " style="left:533.00px;top:114.69px;font-size:11px;line-height:11px;color:#1b1b1b;transform:scaleX(1.1192);">Distribution:</span>
<div class="a " style="left:603px;top:109px;width:169px;height:22px;background:#fff;border:1px solid #a2a6bf;"></div>
<span class="t " style="left:607.30px;top:114.69px;font-size:11px;line-height:11px;color:#1b1b1b;transform:scaleX(1.0398);">vs. time or volume</span>
<svg style="left:762px;top:119px" width="5" height="3" viewBox="0 0 5 3"><path d="M0,0 L5,0 L2.5,3 Z" fill="#606060"/></svg>
<span class="t " style="left:774.80px;top:114.69px;font-size:11px;line-height:11px;color:#1b1b1b;transform:scaleX(0.9771);">Abscissa:</span>
<div class="a " style="left:826px;top:109px;width:50px;height:22px;background:#fff;border:1px solid #a2a6bf;"></div>
<span class="t " style="left:830.40px;top:114.69px;font-size:11px;line-height:11px;color:#1b1b1b;transform:scaleX(0.9620);">mL</span>
<svg style="left:866px;top:119px" width="5" height="3" viewBox="0 0 5 3"><path d="M0,0 L5,0 L2.5,3 Z" fill="#606060"/></svg>
<div class="a " style="left:882px;top:109px;width:1px;height:20px;background:#d3d3da;"></div>
<div class="a " style="left:887px;top:109px;width:20px;height:20px;background:#c5d4ed;"></div>
<span class="t " style="left:889.50px;top:112.26px;font-size:11.5px;line-height:11.5px;color:#1a1a1a;font-weight:700;font-style:italic;transform:scaleX(0.8870);">log</span>
<div class="a " style="left:912px;top:109px;width:1px;height:20px;background:#d3d3da;"></div>
<div class="a " style="left:917px;top:109px;width:20px;height:20px;background:#c5d4ed;"></div>
<svg style="left:917px;top:109px" width="20" height="20" viewBox="0 0 20 20"><path d="M2.6,2 L3.4,1.6 L3.4,5.6" fill="none" stroke="#111" stroke-width="1"/><path d="M5.2,3.5 H17" stroke="#6a6a6a" stroke-width="1"/><path d="M2,15.6 C4,14 4.6,5.6 6.4,5.6 C8.2,5.6 8.2,13 10,15" fill="none" stroke="#e01010" stroke-width="1.1"/><path d="M10,15 C11.6,14.6 12.4,11.6 14,11.6 C15.6,11.6 16,14.6 17.6,15.6" fill="none" stroke="#1060e0" stroke-width="1.1"/></svg>
<svg style="left:940px;top:109px" width="20" height="20" viewBox="0 0 20 20"><path d="M1.6,2 L2.4,1.6 L2.4,5.6" fill="none" stroke="#111" stroke-width="1"/><path d="M4.4,3.5 H16" stroke="#6a6a6a" stroke-width="1"/><path d="M1,15.6 C3,14 3.6,5.6 5.4,5.6 C7.2,5.6 7.4,13 9,15.4" fill="none" stroke="#e01010" stroke-width="1.1"/><path d="M9,15.4 C10.8,13 11,5.6 12.8,5.6 C14.6,5.6 15,14 17,15.6" fill="none" stroke="#1060e0" stroke-width="1.1"/></svg>
<div class="a " style="left:277px;top:134px;width:934px;height:273px;background:#fff;border:1px solid #ebebeb;"></div>
<span class="t " style="left:667.80px;top:138.72px;font-size:14.5px;line-height:14.5px;color:#222;transform:scaleX(1.0110);">Molar Mass vs. volume</span>
<div class="a " style="left:601px;top:161px;width:284px;height:24px;border:1px solid #000;"></div>
<div class="a " style="left:605px;top:166px;width:12px;height:12px;background:#fff;border-top:2px solid #808080;border-left:2px solid #808080;border-right:1px solid #dcdcdc;border-bottom:1px solid #dcdcdc;"></div>
<svg style="left:605px;top:166px" width="12" height="12" viewBox="0 0 12 12"><path d="M3,5.6 L5.2,8.2 L9.6,3.2" fill="none" stroke="#000" stroke-width="1.9"/></svg>
<div class="a " style="left:619px;top:171px;width:15px;height:2px;background:#f00000;"></div>
<span class="t " style="left:639.70px;top:166.69px;font-size:11px;line-height:11px;color:#111;transform:scaleX(1.0086);">polymer_1</span>
<div class="a " style="left:699px;top:166px;width:12px;height:12px;background:#fff;border-top:2px solid #808080;border-left:2px solid #808080;border-right:1px solid #dcdcdc;border-bottom:1px solid #dcdcdc;"></div>
<svg style="left:699px;top:166px" width="12" height="12" viewBox="0 0 12 12"><path d="M3,5.6 L5.2,8.2 L9.6,3.2" fill="none" stroke="#000" stroke-width="1.9"/></svg>
<div class="a " style="left:714px;top:171px;width:13px;height:1px;background:#1010f0;"></div>
<span class="t " style="left:734.10px;top:166.69px;font-size:11px;line-height:11px;color:#111;transform:scaleX(1.0125);">polymer_2</span>
<div class="a " style="left:793px;top:166px;width:12px;height:12px;background:#fff;border-top:2px solid #808080;border-left:2px solid #808080;border-right:1px solid #dcdcdc;border-bottom:1px solid #dcdcdc;"></div>
<svg style="left:793px;top:166px" width="12" height="12" viewBox="0 0 12 12"><path d="M3,5.6 L5.2,8.2 L9.6,3.2" fill="none" stroke="#000" stroke-width="1.9"/></svg>
<div class="a " style="left:808px;top:171px;width:13px;height:1px;background:#10e010;"></div>
<span class="t " style="left:828.20px;top:166.69px;font-size:11px;line-height:11px;color:#111;transform:scaleX(1.0086);">polymer_3</span>
<svg style="left:361px;top:194px" width="841" height="164" viewBox="361 194 841 164" shape-rendering="crispEdges"><path d="M361.0,341.7 C366.7,341.9 384.3,342.4 395.0,342.6 C405.7,342.8 418.2,342.8 425.0,342.7 C431.8,342.6 433.0,342.5 436.0,342.3 C439.0,342.1 440.8,341.9 443.0,341.7 C445.2,341.4 446.6,341.4 449.2,340.8 C451.8,340.2 455.6,339.3 458.8,338.1 C462.0,336.9 465.3,335.9 468.5,333.6 C471.7,331.3 475.2,327.6 478.1,324.2 C481.0,320.8 483.6,316.9 485.8,313.5 C488.0,310.1 489.6,307.3 491.5,303.8 C493.4,300.3 495.4,296.5 497.3,292.3 C499.2,288.1 501.2,283.5 503.1,278.8 C505.0,274.1 506.9,269.2 508.8,264.4 C510.7,259.6 512.7,254.6 514.6,249.9 C516.5,245.2 518.5,240.7 520.4,236.5 C522.3,232.3 524.3,228.3 526.2,224.9 C528.1,221.5 530.0,218.6 531.9,216.0 C533.8,213.4 536.1,210.9 537.7,209.2 C539.3,207.5 540.2,206.8 541.5,206.0 C542.8,205.2 543.9,204.5 545.2,204.4 C546.5,204.3 548.1,204.9 549.5,205.4 C550.9,205.9 551.9,206.3 553.5,207.6 C555.1,208.9 557.3,210.8 559.2,213.4 C561.1,216.0 563.1,219.5 565.0,222.9 C566.9,226.3 568.9,229.9 570.8,233.6 C572.7,237.3 574.6,241.1 576.5,245.1 C578.4,249.1 580.4,253.5 582.3,257.6 C584.2,261.8 586.2,266.0 588.1,270.0 C590.0,274.0 591.9,277.8 593.8,281.7 C595.7,285.6 597.7,289.5 599.6,293.2 C601.5,296.9 603.5,300.5 605.4,303.7 C607.3,306.9 609.3,309.8 611.2,312.4 C613.1,315.0 615.0,317.0 616.9,319.2 C618.8,321.4 620.8,323.5 622.7,325.3 C624.6,327.1 626.2,328.4 628.5,330.0 C630.8,331.6 633.3,333.3 636.2,334.9 C639.1,336.4 642.6,338.2 645.8,339.3 C649.0,340.4 652.2,341.1 655.4,341.7 C658.6,342.3 661.8,342.7 665.0,343.1 C668.2,343.5 670.4,343.7 674.6,344.0 C678.8,344.3 672.4,344.6 690.0,344.8 C707.6,345.0 748.3,345.0 780.0,345.0 C811.7,345.0 860.3,345.2 880.0,344.9 C899.7,344.6 892.9,343.9 898.0,343.2 C903.1,342.5 906.7,341.6 910.6,340.5 C914.5,339.4 918.1,338.3 921.4,336.8 C924.7,335.3 927.7,333.3 930.4,331.4 C933.1,329.4 935.2,327.4 937.6,325.1 C940.0,322.9 942.4,320.3 944.8,317.9 C947.2,315.5 949.6,313.1 952.0,310.7 C954.4,308.3 956.8,305.8 959.2,303.5 C961.6,301.2 964.0,299.1 966.4,297.2 C968.8,295.3 971.2,293.6 973.6,292.3 C976.0,291.0 978.7,290.2 980.8,289.6 C982.9,289.0 984.4,288.8 986.2,288.9 C988.0,288.9 989.5,289.1 991.6,289.9 C993.7,290.7 996.4,292.0 998.8,293.5 C1001.2,295.0 1003.6,296.9 1006.0,298.9 C1008.4,300.8 1010.8,303.0 1013.2,305.2 C1015.6,307.4 1018.0,309.7 1020.4,312.0 C1022.8,314.3 1025.2,316.9 1027.6,319.2 C1030.0,321.5 1032.4,323.9 1034.8,325.9 C1037.2,327.9 1039.6,329.7 1042.0,331.3 C1044.4,332.9 1046.8,334.2 1049.2,335.4 C1051.6,336.6 1053.7,337.5 1056.4,338.5 C1059.1,339.5 1062.4,340.5 1065.4,341.2 C1068.4,341.9 1070.8,342.3 1074.4,342.8 C1078.0,343.3 1082.7,343.9 1087.0,344.2 C1091.3,344.5 1089.5,344.7 1100.0,344.9 C1110.5,345.1 1133.2,345.3 1150.0,345.4 C1166.8,345.5 1192.5,345.6 1201.0,345.6" fill="none" stroke="#f00000" stroke-width="2"/><path d="M361.0,342.3 C366.7,342.5 384.5,343.0 395.0,343.2 C405.5,343.4 417.3,343.4 424.0,343.3 C430.7,343.2 432.0,343.1 435.0,342.9 C438.0,342.7 439.8,342.6 442.0,342.3 C444.2,342.1 445.6,342.0 448.2,341.4 C450.8,340.8 454.6,339.9 457.8,338.7 C461.0,337.5 464.3,336.5 467.5,334.2 C470.7,331.9 474.2,328.2 477.1,324.8 C480.0,321.4 482.6,317.5 484.8,314.1 C487.0,310.7 488.6,307.9 490.5,304.4 C492.4,300.9 494.4,297.1 496.3,292.9 C498.2,288.7 500.2,284.1 502.1,279.4 C504.0,274.8 505.9,269.8 507.8,265.0 C509.7,260.2 511.7,255.2 513.6,250.5 C515.5,245.8 517.5,241.3 519.4,237.1 C521.3,232.9 523.3,228.7 525.2,225.5 C527.1,222.3 529.1,220.4 531.0,218.2 C532.9,216.0 535.0,213.6 536.5,212.2 C538.0,210.8 538.8,210.5 540.0,210.0 C541.2,209.5 542.5,209.0 543.8,209.0 C545.1,209.0 546.2,209.1 547.7,209.8 C549.2,210.5 550.4,210.9 552.5,213.2 C554.6,215.5 558.3,220.0 560.6,223.5 C562.9,227.0 564.5,230.5 566.4,234.2 C568.3,237.9 570.2,241.7 572.1,245.7 C574.0,249.7 576.0,254.1 577.9,258.2 C579.8,262.4 581.8,266.6 583.7,270.6 C585.6,274.6 587.5,278.4 589.4,282.3 C591.3,286.2 593.3,290.1 595.2,293.8 C597.1,297.5 599.1,301.1 601.0,304.3 C602.9,307.5 604.8,310.4 606.8,313.0 C608.8,315.6 611.1,317.6 613.3,319.8 C615.5,322.0 617.7,324.1 620.0,325.9 C622.2,327.7 624.1,329.0 626.7,330.6 C629.3,332.2 632.4,333.9 635.6,335.5 C638.8,337.1 642.5,338.8 645.8,339.9 C649.1,341.0 652.2,341.7 655.4,342.3 C658.6,342.9 661.8,343.3 665.0,343.7 C668.2,344.1 670.4,344.3 674.6,344.6 C678.8,344.9 672.4,345.2 690.0,345.4 C707.6,345.6 748.4,345.6 780.0,345.6 C811.6,345.6 859.8,345.8 879.4,345.5 C899.0,345.2 892.3,344.5 897.4,343.8 C902.5,343.1 906.1,342.2 910.0,341.1 C913.9,340.0 917.5,338.9 920.8,337.4 C924.1,335.9 927.1,333.9 929.8,332.0 C932.5,330.1 934.6,328.0 937.0,325.7 C939.4,323.5 941.8,320.9 944.2,318.5 C946.6,316.1 949.0,313.7 951.4,311.3 C953.8,308.9 956.2,306.4 958.6,304.1 C961.0,301.9 963.4,299.3 965.8,297.8 C968.2,296.3 970.7,295.9 973.0,295.0 C975.3,294.1 977.7,292.9 979.5,292.4 C981.3,291.9 982.4,291.8 984.0,291.8 C985.6,291.8 987.0,291.9 989.0,292.6 C991.0,293.3 993.6,295.1 996.0,296.2 C998.4,297.4 1001.1,297.9 1003.6,299.5 C1006.1,301.1 1008.4,303.6 1010.8,305.8 C1013.2,308.0 1015.6,310.3 1018.0,312.6 C1020.4,314.9 1022.8,317.5 1025.2,319.8 C1027.6,322.1 1030.0,324.5 1032.4,326.5 C1034.8,328.5 1037.3,330.3 1039.8,331.9 C1042.4,333.5 1045.1,334.8 1047.8,336.0 C1050.5,337.2 1052.9,338.1 1055.8,339.1 C1058.7,340.1 1062.3,341.1 1065.4,341.8 C1068.5,342.5 1070.8,342.9 1074.4,343.4 C1078.0,343.9 1082.7,344.5 1087.0,344.8 C1091.3,345.1 1089.5,345.3 1100.0,345.5 C1110.5,345.7 1133.2,345.9 1150.0,346.0 C1166.8,346.1 1192.5,346.2 1201.0,346.2" fill="none" stroke="#0000f0" stroke-width="1"/><path d="M361.0,342.3 C366.7,342.5 384.2,343.0 395.0,343.2 C405.8,343.4 418.7,343.4 425.6,343.3 C432.5,343.2 433.6,343.1 436.6,342.9 C439.6,342.7 441.4,342.6 443.6,342.3 C445.8,342.1 447.2,342.0 449.8,341.4 C452.4,340.8 456.2,339.9 459.4,338.7 C462.6,337.5 465.9,336.5 469.1,334.2 C472.3,331.9 475.8,328.2 478.7,324.8 C481.6,321.4 484.2,317.5 486.4,314.1 C488.6,310.7 490.2,307.9 492.1,304.4 C494.0,300.9 496.0,297.1 497.9,292.9 C499.8,288.7 501.8,284.1 503.7,279.4 C505.6,274.8 507.5,269.8 509.4,265.0 C511.3,260.2 513.3,255.2 515.2,250.5 C517.1,245.8 519.1,241.3 521.0,237.1 C522.9,232.9 524.9,228.9 526.8,225.5 C528.7,222.1 530.6,219.2 532.5,216.6 C534.4,214.0 536.7,211.5 538.3,209.8 C539.9,208.1 540.9,207.4 542.1,206.6 C543.4,205.8 544.4,205.1 545.8,205.0 C547.2,204.9 549.0,205.5 550.5,206.0 C552.0,206.5 552.9,206.9 554.5,208.2 C556.1,209.5 558.3,211.4 560.2,214.0 C562.1,216.6 564.1,220.1 566.0,223.5 C567.9,226.9 569.9,230.5 571.8,234.2 C573.7,237.9 575.6,241.7 577.5,245.7 C579.4,249.7 581.4,254.1 583.3,258.2 C585.2,262.4 587.2,266.6 589.1,270.6 C591.0,274.6 592.9,278.4 594.8,282.3 C596.7,286.2 598.7,290.1 600.6,293.8 C602.5,297.5 604.5,301.1 606.4,304.3 C608.3,307.5 610.3,310.4 612.2,313.0 C614.1,315.6 616.0,317.6 617.9,319.8 C619.8,322.0 621.8,324.1 623.7,325.9 C625.6,327.7 627.2,329.0 629.5,330.6 C631.8,332.2 634.3,333.9 637.2,335.5 C640.1,337.1 643.6,338.8 646.8,339.9 C650.0,341.0 653.2,341.7 656.4,342.3 C659.6,342.9 662.8,343.3 666.0,343.7 C669.2,344.1 671.4,344.3 675.6,344.6 C679.8,344.9 673.6,345.2 691.0,345.4 C708.4,345.6 748.4,345.6 780.0,345.6 C811.6,345.6 860.8,345.8 880.5,345.5 C900.2,345.2 893.4,344.5 898.5,343.8 C903.6,343.1 907.2,342.2 911.1,341.1 C915.0,340.0 918.6,338.9 921.9,337.4 C925.2,335.9 928.2,333.9 930.9,332.0 C933.6,330.1 935.7,328.0 938.1,325.7 C940.5,323.5 942.9,320.9 945.3,318.5 C947.7,316.1 950.1,313.7 952.5,311.3 C954.9,308.9 957.3,306.4 959.7,304.1 C962.1,301.9 964.5,299.7 966.9,297.8 C969.3,295.9 971.7,294.2 974.1,292.9 C976.5,291.6 979.2,290.8 981.3,290.2 C983.4,289.6 984.8,289.4 986.7,289.5 C988.6,289.6 990.3,289.7 992.5,290.5 C994.7,291.3 997.3,292.6 999.7,294.1 C1002.1,295.6 1004.5,297.6 1006.9,299.5 C1009.3,301.4 1011.7,303.6 1014.1,305.8 C1016.5,308.0 1018.9,310.3 1021.3,312.6 C1023.7,314.9 1026.1,317.5 1028.5,319.8 C1030.9,322.1 1033.3,324.5 1035.7,326.5 C1038.1,328.5 1040.5,330.3 1042.9,331.9 C1045.3,333.5 1047.7,334.8 1050.1,336.0 C1052.5,337.2 1054.6,338.1 1057.3,339.1 C1060.0,340.1 1063.3,341.1 1066.3,341.8 C1069.3,342.5 1071.7,342.9 1075.3,343.4 C1078.9,343.9 1083.6,344.5 1087.9,344.8 C1092.2,345.1 1090.6,345.3 1100.9,345.5 C1111.2,345.7 1133.3,345.9 1150.0,346.0 C1166.7,346.1 1192.5,346.2 1201.0,346.2" fill="none" stroke="#00e000" stroke-width="1"/><path d="M489,223.2 L600,223.2 L612,224.4 L615.5,226" fill="none" stroke="#f00000" stroke-width="2.4"/><path d="M483,225.6 L485,224.5 L590,224.5 L603,225.4 L609,226.4 L609.4,228" fill="none" stroke="#0000f0" stroke-width="2"/><path d="M487,221.6 L512,221.6 L513,221 L583,221 L584,221.6 L604,222.4 L611,224 L613.5,225.6" fill="none" stroke="#00e000" stroke-width="2.2"/><path d="M895.5,314.2 L900,315 L920,317 L960,319.4 L1016,321.4 L1040,322 L1060,324.4 L1076,329.2" fill="none" stroke="#f00000" stroke-width="2"/><path d="M891.2,315.4 L894,316.6 L905,317.4 L918,319 L950,320.4 L1016,320.6 L1031,318.8 L1052,319.2 L1066,321 L1074.5,322.8 L1076.5,326.2" fill="none" stroke="#0000f0" stroke-width="2"/><path d="M887.2,318 L930,318.4 L974.5,319.3 L1016,320.5 L1043,321.6 L1060,324.2 L1070,326.8 L1078.5,330.2" fill="none" stroke="#00e000" stroke-width="2"/></svg>
<div class="a " style="left:361px;top:194px;width:841px;height:164px;border:1px solid #000;"></div>
<div class="a " style="left:355px;top:202px;width:6px;height:1px;background:#000;"></div>
<div class="a " style="left:355px;top:223px;width:6px;height:1px;background:#000;"></div>
<div class="a " style="left:355px;top:257px;width:6px;height:1px;background:#000;"></div>
<div class="a " style="left:355px;top:263px;width:6px;height:1px;background:#000;"></div>
<div class="a " style="left:355px;top:269px;width:6px;height:1px;background:#000;"></div>
<div class="a " style="left:355px;top:275px;width:6px;height:1px;background:#000;"></div>
<div class="a " style="left:355px;top:283px;width:6px;height:1px;background:#000;"></div>
<div class="a " style="left:355px;top:292px;width:6px;height:1px;background:#000;"></div>
<div class="a " style="left:355px;top:303px;width:6px;height:1px;background:#000;"></div>
<div class="a " style="left:355px;top:318px;width:6px;height:1px;background:#000;"></div>
<div class="a " style="left:355px;top:339px;width:6px;height:1px;background:#000;"></div>
<div class="a " style="left:388px;top:357px;width:1px;height:3px;background:#000;"></div>
<div class="a " style="left:416px;top:357px;width:1px;height:3px;background:#000;"></div>
<div class="a " style="left:443px;top:357px;width:1px;height:3px;background:#000;"></div>
<div class="a " style="left:470px;top:357px;width:1px;height:3px;background:#000;"></div>
<div class="a " style="left:497px;top:357px;width:1px;height:7px;background:#000;"></div>
<div class="a " style="left:525px;top:357px;width:1px;height:3px;background:#000;"></div>
<div class="a " style="left:552px;top:357px;width:1px;height:3px;background:#000;"></div>
<div class="a " style="left:579px;top:357px;width:1px;height:3px;background:#000;"></div>
<div class="a " style="left:607px;top:357px;width:1px;height:3px;background:#000;"></div>
<div class="a " style="left:634px;top:357px;width:1px;height:7px;background:#000;"></div>
<div class="a " style="left:661px;top:357px;width:1px;height:3px;background:#000;"></div>
<div class="a " style="left:688px;top:357px;width:1px;height:3px;background:#000;"></div>
<div class="a " style="left:716px;top:357px;width:1px;height:3px;background:#000;"></div>
<div class="a " style="left:743px;top:357px;width:1px;height:3px;background:#000;"></div>
<div class="a " style="left:770px;top:357px;width:1px;height:7px;background:#000;"></div>
<div class="a " style="left:797px;top:357px;width:1px;height:3px;background:#000;"></div>
<div class="a " style="left:825px;top:357px;width:1px;height:3px;background:#000;"></div>
<div class="a " style="left:852px;top:357px;width:1px;height:3px;background:#000;"></div>
<div class="a " style="left:879px;top:357px;width:1px;height:3px;background:#000;"></div>
<div class="a " style="left:907px;top:357px;width:1px;height:7px;background:#000;"></div>
<div class="a " style="left:934px;top:357px;width:1px;height:3px;background:#000;"></div>
<div class="a " style="left:961px;top:357px;width:1px;height:3px;background:#000;"></div>
<div class="a " style="left:988px;top:357px;width:1px;height:3px;background:#000;"></div>
<div class="a " style="left:1016px;top:357px;width:1px;height:3px;background:#000;"></div>
<div class="a " style="left:1043px;top:357px;width:1px;height:7px;background:#000;"></div>
<div class="a " style="left:1070px;top:357px;width:1px;height:3px;background:#000;"></div>
<div class="a " style="left:1098px;top:357px;width:1px;height:3px;background:#000;"></div>
<div class="a " style="left:1125px;top:357px;width:1px;height:3px;background:#000;"></div>
<div class="a " style="left:1152px;top:357px;width:1px;height:3px;background:#000;"></div>
<div class="a " style="left:1179px;top:357px;width:1px;height:7px;background:#000;"></div>
<span class="t " style="left:488.50px;top:368.99px;font-size:13px;line-height:13px;color:#111;-webkit-text-stroke:0.45px #111;transform:scaleX(0.9846);">8.5</span>
<span class="t " style="left:624.90px;top:368.99px;font-size:13px;line-height:13px;color:#111;-webkit-text-stroke:0.45px #111;transform:scaleX(0.9846);">9.0</span>
<span class="t " style="left:761.30px;top:368.99px;font-size:13px;line-height:13px;color:#111;-webkit-text-stroke:0.45px #111;transform:scaleX(0.9846);">9.5</span>
<span class="t " style="left:894.50px;top:368.99px;font-size:13px;line-height:13px;color:#111;-webkit-text-stroke:0.45px #111;transform:scaleX(0.9560);">10.0</span>
<span class="t " style="left:1030.90px;top:368.99px;font-size:13px;line-height:13px;color:#111;-webkit-text-stroke:0.45px #111;transform:scaleX(0.9560);">10.5</span>
<span class="t " style="left:1167.30px;top:368.99px;font-size:13px;line-height:13px;color:#111;-webkit-text-stroke:0.45px #111;transform:scaleX(0.9941);">11.0</span>
<span class="t " style="left:747.30px;top:393.26px;font-size:11.5px;line-height:11.5px;color:#111;font-weight:700;transform:scaleX(0.9755);">volume (mL)</span>
<span class="t" style="left:292px;top:276px;font-size:11.5px;line-height:11.5px;font-weight:700;color:#111;-webkit-text-stroke:0.3px #111;transform:translate(-50%,-50%) rotate(-90deg) scaleX(1.0);transform-origin:50% 50%;">Molar Mass (g/mol)</span>
<span class="t " style="left:307.00px;top:253.99px;font-size:13px;line-height:13px;color:#222;transform:scaleX(0.9527);">1.0x10</span>
<span class="t " style="left:343.50px;top:247.68px;font-size:9px;line-height:9px;color:#222;transform:scaleX(1.1963);">5</span>
<div class="a " style="left:1159px;top:199px;width:37px;height:15px;background:#fff;border:1px solid #000;"></div>
<div class="a " style="left:1164px;top:206px;width:8px;height:1px;background:#000;"></div>
<span class="t " style="left:1175.10px;top:200.69px;font-size:11px;line-height:11px;color:#111;transform:scaleX(0.8093);">LS</span>
</section>
<section class="window easi-table">
<div class="a " style="left:268px;top:415px;width:951px;height:339px;background:#fff;border:1px solid #8c8c8c;"></div>
<svg style="left:278px;top:425px" width="16" height="16" viewBox="0 0 16 16"><circle cx="8" cy="8" r="8" fill="#0a5cad"/><rect x="3.40" y="3.80" width="2.8" height="1.8" fill="#eef3ea"/><rect x="6.55" y="3.80" width="2.8" height="1.8" fill="#eef3ea"/><rect x="9.70" y="3.80" width="2.8" height="1.8" fill="#eef3ea"/><rect x="3.40" y="6.00" width="2.8" height="1.8" fill="#eef3ea"/><rect x="6.55" y="6.00" width="2.8" height="1.8" fill="#eef3ea"/><rect x="9.70" y="6.00" width="2.8" height="1.8" fill="#eef3ea"/><rect x="3.40" y="8.20" width="2.8" height="1.8" fill="#eef3ea"/><rect x="6.55" y="8.20" width="2.8" height="1.8" fill="#eef3ea"/><rect x="9.70" y="8.20" width="2.8" height="1.8" fill="#eef3ea"/><rect x="3.40" y="10.40" width="2.8" height="1.8" fill="#eef3ea"/><rect x="6.55" y="10.40" width="2.8" height="1.8" fill="#eef3ea"/><rect x="9.70" y="10.40" width="2.8" height="1.8" fill="#eef3ea"/></svg>
<span class="t " style="left:301.90px;top:428.43px;font-size:11.3px;line-height:11.3px;color:#9c9ca6;transform:scaleX(0.9392);">EASI Table</span>
<div class="a " style="left:1140px;top:436px;width:6px;height:2px;background:#ababab;"></div>
<div class="a " style="left:1166px;top:430px;width:9px;height:9px;border:1px solid #b4b4b4;border-top:2px solid #ababab;"></div>
<svg style="left:1193px;top:431px" width="8" height="7" viewBox="0 0 8 7"><path d="M0.3,0 L7.7,7 M7.7,0 L0.3,7" stroke="#ababab" stroke-width="1.3" fill="none"/></svg>
<span class="t " style="left:285.90px;top:453.69px;font-size:11px;line-height:11px;color:#1b1b1b;transform:scaleX(1.0093);">Experiments:</span>
<div class="a " style="left:356px;top:448px;width:100px;height:22px;background:#fff;border:1px solid #a2a6bf;"></div>
<span class="t " style="left:360.30px;top:453.69px;font-size:11px;line-height:11px;color:#1b1b1b;transform:scaleX(1.1280);">All</span>
<svg style="left:446px;top:458px" width="5" height="3" viewBox="0 0 5 3"><path d="M0,0 L5,0 L2.5,3 Z" fill="#606060"/></svg>
<span class="t " style="left:459.30px;top:453.69px;font-size:11px;line-height:11px;color:#1b1b1b;transform:scaleX(0.9483);">Peaks:</span>
<div class="a " style="left:496px;top:448px;width:100px;height:22px;background:#fff;border:1px solid #a2a6bf;"></div>
<span class="t " style="left:500.70px;top:453.69px;font-size:11px;line-height:11px;color:#1b1b1b;transform:scaleX(1.1280);">All</span>
<svg style="left:586px;top:458px" width="5" height="3" viewBox="0 0 5 3"><path d="M0,0 L5,0 L2.5,3 Z" fill="#606060"/></svg>
<span class="t " style="left:599.30px;top:453.69px;font-size:11px;line-height:11px;color:#1b1b1b;transform:scaleX(0.9459);">Scalars:</span>
<div class="a " style="left:642px;top:448px;width:100px;height:22px;background:#fff;border:1px solid #a2a6bf;"></div>
<span class="t " style="left:647.20px;top:453.69px;font-size:11px;line-height:11px;color:#1b1b1b;transform:scaleX(1.0262);">Custom</span>
<svg style="left:732px;top:458px" width="5" height="3" viewBox="0 0 5 3"><path d="M0,0 L5,0 L2.5,3 Z" fill="#606060"/></svg>
<span class="t " style="left:744.50px;top:453.69px;font-size:11px;line-height:11px;color:#1b1b1b;transform:scaleX(0.9813);">Abscissa:</span>
<div class="a " style="left:796px;top:448px;width:50px;height:22px;background:#fff;border:1px solid #a2a6bf;"></div>
<span class="t " style="left:800.30px;top:453.69px;font-size:11px;line-height:11px;color:#1b1b1b;transform:scaleX(1.1052);">min</span>
<svg style="left:836px;top:458px" width="5" height="3" viewBox="0 0 5 3"><path d="M0,0 L5,0 L2.5,3 Z" fill="#606060"/></svg>
<div class="a " style="left:852px;top:447px;width:1px;height:21px;background:#cdcdd2;"></div>
<svg style="left:860px;top:450px" width="15" height="16" viewBox="0 0 15 16"><path d="M1,0.8 L8.6,0.8 L11.6,3.8 L11.6,15 L1,15 Z" fill="#e9f0f3" stroke="#8a9aa4" stroke-width="0.9"/><path d="M8.6,0.8 L8.6,3.8 L11.6,3.8" fill="#e4ebf4" stroke="#8a9bb8" stroke-width="0.8"/><path d="M6.4,11.6 H12 M10.2,9.2 L13.2,11.6 L10.2,14" fill="none" stroke="#2d7fe0" stroke-width="1.7"/></svg>
<svg style="left:881px;top:450px" width="18" height="15" viewBox="0 0 18 15"><rect x="0.8" y="4.2" width="12.4" height="9.2" fill="#f6e08a" stroke="#9c8420" stroke-width="0.9"/><path d="M5.4,10.8 L13.4,2.8 L15.4,4.8 L7.4,12.4 L4.8,13 Z" fill="#d8a848" stroke="#5a3c10" stroke-width="0.8"/><path d="M13.4,2.8 L14.8,1.4 L16.8,3.4 L15.4,4.8 Z" fill="#e04a3a" stroke="#7a1c10" stroke-width="0.6"/><path d="M4.8,13 L5.4,10.8 L7.4,12.4 Z" fill="#222"/></svg>
<div class="a " style="left:276px;top:473px;width:935px;height:273px;background:#fff;border:1px solid #a2a2a2;"></div>
<div class="a " style="left:277px;top:474px;width:1px;height:271px;background:#a8a8a8;"></div>
<div class="a " style="left:277px;top:474px;width:933px;height:1px;background:#a8a8a8;"></div>
<div class="a " style="left:402px;top:475px;width:1px;height:45px;background:#a2a2a2;"></div>
<div class="a " style="left:403px;top:497px;width:782px;height:1px;background:#b0b0b0;"></div>
<div class="a " style="left:278px;top:519px;width:932px;height:1px;background:#9c9c9c;"></div>
<div class="a " style="left:481px;top:498px;width:1px;height:21px;background:#d4d4d4;"></div>
<div class="a " style="left:560px;top:498px;width:1px;height:21px;background:#d4d4d4;"></div>
<div class="a " style="left:697px;top:498px;width:1px;height:21px;background:#d4d4d4;"></div>
<div class="a " style="left:799px;top:475px;width:1px;height:44px;background:#d4d4d4;"></div>
<div class="a " style="left:872px;top:498px;width:1px;height:21px;background:#d4d4d4;"></div>
<div class="a " style="left:945px;top:498px;width:1px;height:21px;background:#d4d4d4;"></div>
<div class="a " style="left:1082px;top:498px;width:1px;height:21px;background:#d4d4d4;"></div>
<div class="a " style="left:1184px;top:475px;width:1px;height:44px;background:#d4d4d4;"></div>
<svg style="left:385px;top:502px" width="14" height="13" viewBox="0 0 14 13"><path d="M13,0 L13,12.6 L0,12.6 Z" fill="#d2d2d2"/></svg>
<span class="t " style="left:583.50px;top:479.84px;font-size:12px;line-height:12px;color:#1b1b1b;transform:scaleX(0.9154);">Peak 1</span>
<span class="t " style="left:974.70px;top:479.84px;font-size:12px;line-height:12px;color:#1b1b1b;transform:scaleX(0.9368);">Peak 2</span>
<span class="t " style="left:417.80px;top:502.84px;font-size:12px;line-height:12px;color:#1b1b1b;transform:scaleX(0.9951);">Mn (kDa)</span>
<span class="t " style="left:495.80px;top:502.84px;font-size:12px;line-height:12px;color:#1b1b1b;transform:scaleX(0.9956);">Mw (kDa)</span>
<span class="t " style="left:565.40px;top:502.84px;font-size:12px;line-height:12px;color:#1b1b1b;transform:scaleX(1.0264);">Polydispersity (Mw/Mn)</span>
<span class="t " style="left:702.50px;top:502.84px;font-size:12px;line-height:12px;color:#1b1b1b;transform:scaleX(0.9929);">Mass fraction (%)</span>
<span class="t " style="left:811.90px;top:502.84px;font-size:12px;line-height:12px;color:#1b1b1b;">Mn (kDa)</span>
<span class="t " style="left:883.70px;top:502.84px;font-size:12px;line-height:12px;color:#1b1b1b;transform:scaleX(0.9956);">Mw (kDa)</span>
<span class="t " style="left:950.30px;top:502.84px;font-size:12px;line-height:12px;color:#1b1b1b;transform:scaleX(1.0304);">Polydispersity (Mw/Mn)</span>
<span class="t " style="left:1087.80px;top:502.84px;font-size:12px;line-height:12px;color:#1b1b1b;transform:scaleX(0.9919);">Mass fraction (%)</span>
<div class="a " style="left:402px;top:520px;width:1px;height:57px;background:#a2a2a2;"></div>
<span class="t " style="left:282.10px;top:523.84px;font-size:12px;line-height:12px;color:#1b1b1b;transform:scaleX(0.9709);">polymer_1</span>
<div class="a " style="left:278px;top:538px;width:124px;height:1px;background:#c4c4c4;"></div>
<div class="a " style="left:403px;top:538px;width:782px;height:1px;background:#ececec;"></div>
<span class="t " style="left:405.70px;top:522.84px;font-size:12px;line-height:12px;color:#1b1b1b;transform:scaleX(0.9496);">201.2 (±0.0%)</span>
<span class="t " style="left:484.70px;top:522.84px;font-size:12px;line-height:12px;color:#1b1b1b;transform:scaleX(0.9496);">201.2 (±0.0%)</span>
<span class="t " style="left:563.70px;top:522.84px;font-size:12px;line-height:12px;color:#1b1b1b;transform:scaleX(0.9429);">1.00 (±0.07%)</span>
<span class="t " style="left:700.70px;top:522.84px;font-size:12px;line-height:12px;color:#1b1b1b;transform:scaleX(0.8836);">26.1</span>
<span class="t " style="left:802.70px;top:522.84px;font-size:12px;line-height:12px;color:#1b1b1b;transform:scaleX(0.9457);">28.5 (±0.1%)</span>
<span class="t " style="left:875.70px;top:522.84px;font-size:12px;line-height:12px;color:#1b1b1b;transform:scaleX(0.9457);">28.6 (±0.1%)</span>
<span class="t " style="left:948.70px;top:522.84px;font-size:12px;line-height:12px;color:#1b1b1b;transform:scaleX(0.9429);">1.00 (±0.08%)</span>
<span class="t " style="left:1085.70px;top:522.84px;font-size:12px;line-height:12px;color:#1b1b1b;transform:scaleX(0.9606);">73.9</span>
<span class="t " style="left:282.10px;top:542.84px;font-size:12px;line-height:12px;color:#1b1b1b;transform:scaleX(0.9709);">polymer_2</span>
<div class="a " style="left:278px;top:557px;width:124px;height:1px;background:#c4c4c4;"></div>
<div class="a " style="left:403px;top:557px;width:782px;height:1px;background:#ececec;"></div>
<span class="t " style="left:405.70px;top:541.84px;font-size:12px;line-height:12px;color:#1b1b1b;transform:scaleX(0.9496);">194.3 (±0.1%)</span>
<span class="t " style="left:484.70px;top:541.84px;font-size:12px;line-height:12px;color:#1b1b1b;transform:scaleX(0.9496);">194.3 (±0.1%)</span>
<span class="t " style="left:563.70px;top:541.84px;font-size:12px;line-height:12px;color:#1b1b1b;transform:scaleX(0.9429);">1.00 (±0.12%)</span>
<span class="t " style="left:700.70px;top:541.84px;font-size:12px;line-height:12px;color:#1b1b1b;transform:scaleX(0.9606);">26.7</span>
<span class="t " style="left:802.70px;top:541.84px;font-size:12px;line-height:12px;color:#1b1b1b;transform:scaleX(0.9457);">28.4 (±0.1%)</span>
<span class="t " style="left:875.70px;top:541.84px;font-size:12px;line-height:12px;color:#1b1b1b;transform:scaleX(0.9457);">28.4 (±0.1%)</span>
<span class="t " style="left:948.70px;top:541.84px;font-size:12px;line-height:12px;color:#1b1b1b;transform:scaleX(0.9429);">1.00 (±0.16%)</span>
<span class="t " style="left:1085.70px;top:541.84px;font-size:12px;line-height:12px;color:#1b1b1b;transform:scaleX(0.9606);">73.3</span>
<span class="t " style="left:282.10px;top:561.84px;font-size:12px;line-height:12px;color:#1b1b1b;transform:scaleX(0.9709);">polymer_3</span>
<span class="t " style="left:405.70px;top:560.84px;font-size:12px;line-height:12px;color:#1b1b1b;transform:scaleX(0.9496);">204.5 (±0.0%)</span>
<span class="t " style="left:484.70px;top:560.84px;font-size:12px;line-height:12px;color:#1b1b1b;transform:scaleX(0.9496);">204.5 (±0.0%)</span>
<span class="t " style="left:563.70px;top:560.84px;font-size:12px;line-height:12px;color:#1b1b1b;transform:scaleX(0.9429);">1.00 (±0.06%)</span>
<span class="t " style="left:700.70px;top:560.84px;font-size:12px;line-height:12px;color:#1b1b1b;transform:scaleX(0.9606);">26.0</span>
<span class="t " style="left:802.70px;top:560.84px;font-size:12px;line-height:12px;color:#1b1b1b;transform:scaleX(0.9457);">28.9 (±0.1%)</span>
<span class="t " style="left:875.70px;top:560.84px;font-size:12px;line-height:12px;color:#1b1b1b;transform:scaleX(0.9457);">28.9 (±0.1%)</span>
<span class="t " style="left:948.70px;top:560.84px;font-size:12px;line-height:12px;color:#1b1b1b;transform:scaleX(0.9429);">1.00 (±0.08%)</span>
<span class="t " style="left:1085.70px;top:560.84px;font-size:12px;line-height:12px;color:#1b1b1b;transform:scaleX(0.9606);">74.0</span>
<div class="a " style="left:481px;top:520px;width:1px;height:57px;background:#ececec;"></div>
<div class="a " style="left:560px;top:520px;width:1px;height:57px;background:#ececec;"></div>
<div class="a " style="left:697px;top:520px;width:1px;height:57px;background:#ececec;"></div>
<div class="a " style="left:799px;top:520px;width:1px;height:57px;background:#ececec;"></div>
<div class="a " style="left:872px;top:520px;width:1px;height:57px;background:#ececec;"></div>
<div class="a " style="left:945px;top:520px;width:1px;height:57px;background:#ececec;"></div>
<div class="a " style="left:1082px;top:520px;width:1px;height:57px;background:#ececec;"></div>
<div class="a " style="left:1184px;top:520px;width:1px;height:57px;background:#ececec;"></div>
<div class="a " style="left:1184px;top:576px;width:1px;height:6px;background:#a2a2a2;"></div>
<div class="a " style="left:277px;top:581px;width:908px;height:1px;background:#a2a2a2;"></div>
<div class="a " style="left:278px;top:582px;width:907px;height:1px;background:#cfcfcf;"></div>
<div class="a " style="left:403px;top:583px;width:782px;height:95px;background:#cbe3fd;"></div>
<div class="a " style="left:402px;top:582px;width:1px;height:96px;background:#a2a2a2;"></div>
<span class="t " style="left:282.10px;top:586.84px;font-size:12px;line-height:12px;color:#1b1b1b;">Average</span>
<div class="a " style="left:278px;top:601px;width:124px;height:1px;background:#c4c4c4;"></div>
<div class="a " style="left:403px;top:601px;width:782px;height:1px;background:#ddecfb;"></div>
<span class="t " style="left:405.70px;top:585.84px;font-size:12px;line-height:12px;color:#1b1b1b;transform:scaleX(0.9627);">200.0</span>
<span class="t " style="left:484.70px;top:585.84px;font-size:12px;line-height:12px;color:#1b1b1b;transform:scaleX(0.9627);">200.0</span>
<span class="t " style="left:563.70px;top:585.84px;font-size:12px;line-height:12px;color:#1b1b1b;transform:scaleX(0.9606);">1.00</span>
<span class="t " style="left:700.70px;top:585.84px;font-size:12px;line-height:12px;color:#1b1b1b;transform:scaleX(0.9606);">26.3</span>
<span class="t " style="left:802.70px;top:585.84px;font-size:12px;line-height:12px;color:#1b1b1b;transform:scaleX(0.9606);">28.6</span>
<span class="t " style="left:875.70px;top:585.84px;font-size:12px;line-height:12px;color:#1b1b1b;transform:scaleX(0.9606);">28.6</span>
<span class="t " style="left:948.70px;top:585.84px;font-size:12px;line-height:12px;color:#1b1b1b;transform:scaleX(0.9606);">1.00</span>
<span class="t " style="left:1085.70px;top:585.84px;font-size:12px;line-height:12px;color:#1b1b1b;transform:scaleX(0.9606);">73.7</span>
<span class="t " style="left:282.10px;top:605.84px;font-size:12px;line-height:12px;color:#1b1b1b;transform:scaleX(0.9932);">Standard deviation</span>
<div class="a " style="left:278px;top:620px;width:124px;height:1px;background:#c4c4c4;"></div>
<div class="a " style="left:403px;top:620px;width:782px;height:1px;background:#ddecfb;"></div>
<span class="t " style="left:405.70px;top:604.84px;font-size:12px;line-height:12px;color:#1b1b1b;transform:scaleX(0.9570);">5.2</span>
<span class="t " style="left:484.70px;top:604.84px;font-size:12px;line-height:12px;color:#1b1b1b;transform:scaleX(0.9570);">5.2</span>
<span class="t " style="left:563.70px;top:604.84px;font-size:12px;line-height:12px;color:#1b1b1b;transform:scaleX(0.9606);">0.00</span>
<span class="t " style="left:700.70px;top:604.84px;font-size:12px;line-height:12px;color:#1b1b1b;transform:scaleX(0.9570);">0.4</span>
<span class="t " style="left:802.70px;top:604.84px;font-size:12px;line-height:12px;color:#1b1b1b;transform:scaleX(0.9570);">0.3</span>
<span class="t " style="left:875.70px;top:604.84px;font-size:12px;line-height:12px;color:#1b1b1b;transform:scaleX(0.9570);">0.3</span>
<span class="t " style="left:948.70px;top:604.84px;font-size:12px;line-height:12px;color:#1b1b1b;transform:scaleX(0.9606);">0.00</span>
<span class="t " style="left:1085.70px;top:604.84px;font-size:12px;line-height:12px;color:#1b1b1b;transform:scaleX(0.9570);">0.4</span>
<span class="t " style="left:282.10px;top:624.84px;font-size:12px;line-height:12px;color:#1b1b1b;transform:scaleX(0.9809);">% Standard deviation</span>
<div class="a " style="left:278px;top:639px;width:124px;height:1px;background:#c4c4c4;"></div>
<div class="a " style="left:403px;top:639px;width:782px;height:1px;background:#ddecfb;"></div>
<span class="t " style="left:405.70px;top:623.84px;font-size:12px;line-height:12px;color:#1b1b1b;transform:scaleX(0.9570);">2.6</span>
<span class="t " style="left:484.70px;top:623.84px;font-size:12px;line-height:12px;color:#1b1b1b;transform:scaleX(0.9570);">2.6</span>
<span class="t " style="left:563.70px;top:623.84px;font-size:12px;line-height:12px;color:#1b1b1b;transform:scaleX(0.9606);">0.00</span>
<span class="t " style="left:700.70px;top:623.84px;font-size:12px;line-height:12px;color:#1b1b1b;transform:scaleX(0.9570);">1.4</span>
<span class="t " style="left:802.70px;top:623.84px;font-size:12px;line-height:12px;color:#1b1b1b;transform:scaleX(0.9570);">1.0</span>
<span class="t " style="left:875.70px;top:623.84px;font-size:12px;line-height:12px;color:#1b1b1b;transform:scaleX(0.9570);">1.0</span>
<span class="t " style="left:948.70px;top:623.84px;font-size:12px;line-height:12px;color:#1b1b1b;transform:scaleX(0.9606);">0.02</span>
<span class="t " style="left:1085.70px;top:623.84px;font-size:12px;line-height:12px;color:#1b1b1b;transform:scaleX(0.9570);">0.5</span>
<span class="t " style="left:282.10px;top:643.84px;font-size:12px;line-height:12px;color:#1b1b1b;transform:scaleX(1.0869);">Minimum</span>
<div class="a " style="left:278px;top:658px;width:124px;height:1px;background:#c4c4c4;"></div>
<div class="a " style="left:403px;top:658px;width:782px;height:1px;background:#ddecfb;"></div>
<span class="t " style="left:405.70px;top:642.84px;font-size:12px;line-height:12px;color:#1b1b1b;transform:scaleX(0.9627);">194.3</span>
<span class="t " style="left:484.70px;top:642.84px;font-size:12px;line-height:12px;color:#1b1b1b;transform:scaleX(0.9627);">194.3</span>
<span class="t " style="left:563.70px;top:642.84px;font-size:12px;line-height:12px;color:#1b1b1b;transform:scaleX(0.9606);">1.00</span>
<span class="t " style="left:700.70px;top:642.84px;font-size:12px;line-height:12px;color:#1b1b1b;transform:scaleX(0.9606);">26.0</span>
<span class="t " style="left:802.70px;top:642.84px;font-size:12px;line-height:12px;color:#1b1b1b;transform:scaleX(0.9606);">28.4</span>
<span class="t " style="left:875.70px;top:642.84px;font-size:12px;line-height:12px;color:#1b1b1b;transform:scaleX(0.9606);">28.4</span>
<span class="t " style="left:948.70px;top:642.84px;font-size:12px;line-height:12px;color:#1b1b1b;transform:scaleX(0.9606);">1.00</span>
<span class="t " style="left:1085.70px;top:642.84px;font-size:12px;line-height:12px;color:#1b1b1b;transform:scaleX(0.9606);">73.3</span>
<span class="t " style="left:282.10px;top:662.84px;font-size:12px;line-height:12px;color:#1b1b1b;transform:scaleX(1.0555);">Maximum</span>
<span class="t " style="left:405.70px;top:661.84px;font-size:12px;line-height:12px;color:#1b1b1b;transform:scaleX(0.9627);">204.5</span>
<span class="t " style="left:484.70px;top:661.84px;font-size:12px;line-height:12px;color:#1b1b1b;transform:scaleX(0.9627);">204.5</span>
<span class="t " style="left:563.70px;top:661.84px;font-size:12px;line-height:12px;color:#1b1b1b;transform:scaleX(0.9606);">1.00</span>
<span class="t " style="left:700.70px;top:661.84px;font-size:12px;line-height:12px;color:#1b1b1b;transform:scaleX(0.9606);">26.7</span>
<span class="t " style="left:802.70px;top:661.84px;font-size:12px;line-height:12px;color:#1b1b1b;transform:scaleX(0.9606);">28.9</span>
<span class="t " style="left:875.70px;top:661.84px;font-size:12px;line-height:12px;color:#1b1b1b;transform:scaleX(0.9606);">28.9</span>
<span class="t " style="left:948.70px;top:661.84px;font-size:12px;line-height:12px;color:#1b1b1b;transform:scaleX(0.9606);">1.00</span>
<span class="t " style="left:1085.70px;top:661.84px;font-size:12px;line-height:12px;color:#1b1b1b;transform:scaleX(0.9606);">74.0</span>
<div class="a " style="left:481px;top:582px;width:1px;height:96px;background:#ddecfb;"></div>
<div class="a " style="left:560px;top:582px;width:1px;height:96px;background:#ddecfb;"></div>
<div class="a " style="left:697px;top:582px;width:1px;height:96px;background:#ddecfb;"></div>
<div class="a " style="left:799px;top:582px;width:1px;height:96px;background:#ddecfb;"></div>
<div class="a " style="left:872px;top:582px;width:1px;height:96px;background:#ddecfb;"></div>
<div class="a " style="left:945px;top:582px;width:1px;height:96px;background:#ddecfb;"></div>
<div class="a " style="left:1082px;top:582px;width:1px;height:96px;background:#ddecfb;"></div>
<div class="a " style="left:278px;top:677px;width:125px;height:1px;background:#a2a2a2;"></div>
</section>
</main>
</body></html>
